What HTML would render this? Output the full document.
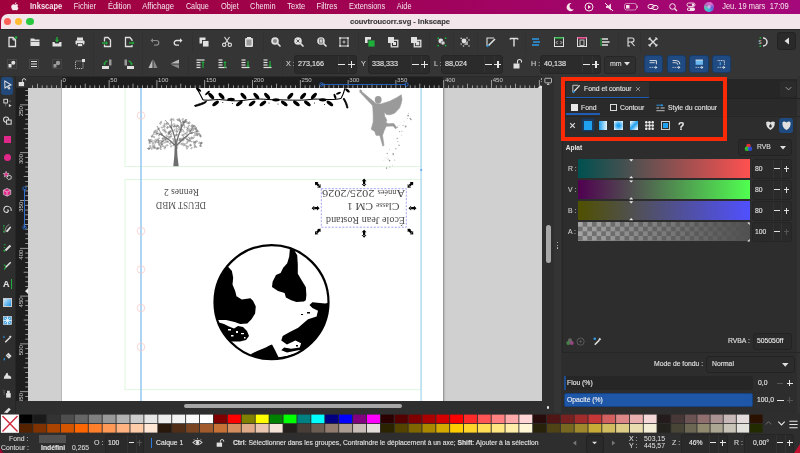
<!DOCTYPE html><html><head><meta charset="utf-8"><style>
html,body{margin:0;padding:0;}
body{width:800px;height:453px;overflow:hidden;position:relative;background:#2e2e2e;font-family:"Liberation Sans",sans-serif;}
.t{position:absolute;line-height:1;white-space:nowrap;-webkit-font-smoothing:antialiased;will-change:transform;-webkit-text-stroke:0.12px currentColor;}
.r{position:absolute;box-sizing:border-box;}
svg{position:absolute;overflow:visible;}
.tx{will-change:transform;pointer-events:none;}
</style></head><body>
<div class="r" style="left:0.00px;top:0.00px;width:800.00px;height:13.50px;background:linear-gradient(90deg,#a1023e 0%,#a0024a 35%,#a0035c 55%,#a2056c 75%,#a5087a 100%);"></div>
<svg style="left:11.2px;top:2px" width="7.6" height="8.7" viewBox="0 0 10 11.2"><path d="M5 3.3C5.8 3.3 6.5 2.7 7.6 2.8C8.4 2.85 9.1 3.2 9.6 3.9C8.3 4.7 8.2 6.9 9.8 7.7C9.4 8.9 8.5 10.9 7.4 10.9C6.6 10.9 6.3 10.4 5.3 10.4C4.3 10.4 3.9 10.9 3.1 10.9C2 10.9 0.3 8.4 0.3 6.2C0.3 4.1 1.8 2.8 3.1 2.8C4 2.8 4.4 3.3 5 3.3Z M5.1 2.6C5 1.5 5.8 0.4 7.1 0.2C7.2 1.5 6.3 2.5 5.1 2.6Z" fill="#f6eaee"/></svg>
<svg class="tx" style="left:0;top:0" width="800" height="453"><text x="30.00" y="9.09" textLength="32.25" lengthAdjust="spacingAndGlyphs" font-family="Liberation Sans" font-size="8.2" font-weight="700" fill="#f5e6ec">Inkscape</text></svg>
<svg class="tx" style="left:0;top:0" width="800" height="453"><text x="73.75" y="9.09" textLength="22.25" lengthAdjust="spacingAndGlyphs" font-family="Liberation Sans" font-size="8.2" font-weight="400" fill="#f5e6ec">Fichier</text></svg>
<svg class="tx" style="left:0;top:0" width="800" height="453"><text x="107.90" y="9.09" textLength="23.00" lengthAdjust="spacingAndGlyphs" font-family="Liberation Sans" font-size="8.2" font-weight="400" fill="#f5e6ec">Édition</text></svg>
<svg class="tx" style="left:0;top:0" width="800" height="453"><text x="142.20" y="9.09" textLength="31.80" lengthAdjust="spacingAndGlyphs" font-family="Liberation Sans" font-size="8.2" font-weight="400" fill="#f5e6ec">Affichage</text></svg>
<svg class="tx" style="left:0;top:0" width="800" height="453"><text x="185.90" y="9.09" textLength="22.90" lengthAdjust="spacingAndGlyphs" font-family="Liberation Sans" font-size="8.2" font-weight="400" fill="#f5e6ec">Calque</text></svg>
<svg class="tx" style="left:0;top:0" width="800" height="453"><text x="221.00" y="9.09" textLength="17.75" lengthAdjust="spacingAndGlyphs" font-family="Liberation Sans" font-size="8.2" font-weight="400" fill="#f5e6ec">Objet</text></svg>
<svg class="tx" style="left:0;top:0" width="800" height="453"><text x="250.10" y="9.09" textLength="25.40" lengthAdjust="spacingAndGlyphs" font-family="Liberation Sans" font-size="8.2" font-weight="400" fill="#f5e6ec">Chemin</text></svg>
<svg class="tx" style="left:0;top:0" width="800" height="453"><text x="287.25" y="9.09" textLength="18.00" lengthAdjust="spacingAndGlyphs" font-family="Liberation Sans" font-size="8.2" font-weight="400" fill="#f5e6ec">Texte</text></svg>
<svg class="tx" style="left:0;top:0" width="800" height="453"><text x="316.50" y="9.09" textLength="20.70" lengthAdjust="spacingAndGlyphs" font-family="Liberation Sans" font-size="8.2" font-weight="400" fill="#f5e6ec">Filtres</text></svg>
<svg class="tx" style="left:0;top:0" width="800" height="453"><text x="349.10" y="9.09" textLength="36.00" lengthAdjust="spacingAndGlyphs" font-family="Liberation Sans" font-size="8.2" font-weight="400" fill="#f5e6ec">Extensions</text></svg>
<svg class="tx" style="left:0;top:0" width="800" height="453"><text x="396.80" y="9.09" textLength="14.70" lengthAdjust="spacingAndGlyphs" font-family="Liberation Sans" font-size="8.2" font-weight="400" fill="#f5e6ec">Aide</text></svg>
<svg class="tx" style="left:0;top:0" width="800" height="453"><text x="722.15" y="9.09" textLength="43.20" lengthAdjust="spacingAndGlyphs" font-family="Liberation Sans" font-size="8.2" font-weight="400" fill="#f5e6ec">Jeu. 19 mars</text></svg>
<svg class="tx" style="left:0;top:0" width="800" height="453"><text x="769.85" y="9.09" textLength="18.90" lengthAdjust="spacingAndGlyphs" font-family="Liberation Sans" font-size="8.2" font-weight="400" fill="#f5e6ec">17:09</text></svg>
<svg style="left:565.00px;top:2.00px" width="10" height="10" viewBox="0 0 10 10"><path d="M6.5 1.2A4 4 0 1 0 9 7.3 3.3 3.3 0 0 1 6.5 1.2z" fill="#f5e6ec"/></svg>
<svg style="left:584.00px;top:2.00px" width="10" height="10" viewBox="0 0 10 10"><circle cx="5" cy="5" r="4" fill="none" stroke="#f5e6ec" stroke-width="1"/><path d="M4 3v4l3-2z" fill="#f5e6ec"/></svg>
<svg style="left:604.00px;top:2.00px" width="10" height="10" viewBox="0 0 10 10"><path d="M2 4h2l3-2.5v7L4 6H2z" fill="#f5e6ec" opacity="0.9"/><path d="M1 1l8 8" stroke="#f5e6ec" stroke-width="1"/></svg>
<svg style="left:623.50px;top:3.00px" width="14" height="8" viewBox="0 0 14 8"><rect x="0.5" y="0.5" width="12" height="6.5" rx="2" fill="none" stroke="#f5e6ec" stroke-width="0.8" opacity="0.7"/><rect x="2" y="2" width="3.5" height="3.5" fill="#f5e6ec"/><rect x="13" y="2.5" width="1" height="2.5" fill="#f5e6ec" opacity="0.6"/></svg>
<svg style="left:647.00px;top:2.00px" width="12" height="10" viewBox="0 0 12 10"><rect x="1" y="2.5" width="6" height="4" rx="2" fill="none" stroke="#f5e6ec" stroke-width="1"/><rect x="5" y="3.5" width="6" height="4" rx="2" fill="none" stroke="#f5e6ec" stroke-width="1"/></svg>
<svg style="left:668.00px;top:2.00px" width="10" height="10" viewBox="0 0 10 10"><circle cx="4.5" cy="4.5" r="2.8" fill="none" stroke="#f5e6ec" stroke-width="1"/><path d="M6.5 6.5l2.5 2.5" stroke="#f5e6ec" stroke-width="1.2"/></svg>
<svg style="left:686.00px;top:2.00px" width="10" height="10" viewBox="0 0 10 10"><rect x="1" y="1" width="8" height="3.5" rx="1.7" fill="none" stroke="#f5e6ec" stroke-width="0.9"/><circle cx="7" cy="2.75" r="1.2" fill="#f5e6ec"/><rect x="1" y="5.5" width="8" height="3.5" rx="1.7" fill="#f5e6ec"/><circle cx="3" cy="7.25" r="1" fill="#a1056e"/></svg>
<div class="r" style="left:704.30px;top:2.30px;width:9.40px;height:9.40px;background:conic-gradient(from 30deg,#e070d0,#6a5ad8,#3ab0e0,#50d0b0,#c060c0,#e070d0);border-radius:50%;"></div>
<div class="r" style="left:706.80px;top:4.80px;width:4.40px;height:4.40px;background:radial-gradient(circle,#f0e0ff,#9080e0);border-radius:50%;opacity:0.7;"></div>
<div class="r" style="left:0.00px;top:13.00px;width:20.00px;height:17.00px;background:#a1023e;"></div>
<div class="r" style="left:0.50px;top:13.50px;width:799.50px;height:16.20px;background:#f3e6eb;border-top-left-radius:7px;"></div>
<div class="r" style="left:0.00px;top:29.20px;width:800.00px;height:0.80px;background:#262626;"></div>
<div class="r" style="left:4.20px;top:18.00px;width:7.20px;height:7.20px;background:#fe5f57;border-radius:50%;"></div>
<div class="r" style="left:15.20px;top:18.00px;width:7.20px;height:7.20px;background:#febc2e;border-radius:50%;"></div>
<div class="r" style="left:26.40px;top:18.00px;width:7.20px;height:7.20px;background:#2ac840;border-radius:50%;"></div>
<div class="t" style="left:349.50px;top:17.94px;font-size:7.6px;color:#3a3839;font-weight:700;letter-spacing:-0.05px;">couvtroucorr.svg - Inkscape</div>
<div class="r" style="left:0.00px;top:30.00px;width:800.00px;height:46.00px;background:#353535;"></div>
<div class="r" style="left:92.75px;top:31.00px;width:0.80px;height:22.00px;background:#313131;"></div>
<div class="r" style="left:141.75px;top:31.00px;width:0.80px;height:22.00px;background:#313131;"></div>
<div class="r" style="left:191.60px;top:31.00px;width:0.80px;height:22.00px;background:#313131;"></div>
<div class="r" style="left:262.60px;top:31.00px;width:0.80px;height:22.00px;background:#313131;"></div>
<div class="r" style="left:358.00px;top:31.00px;width:0.80px;height:22.00px;background:#313131;"></div>
<div class="r" style="left:429.00px;top:31.00px;width:0.80px;height:22.00px;background:#313131;"></div>
<div class="r" style="left:453.00px;top:31.00px;width:0.80px;height:22.00px;background:#313131;"></div>
<div class="r" style="left:477.00px;top:31.00px;width:0.80px;height:22.00px;background:#313131;"></div>
<div class="r" style="left:525.00px;top:31.00px;width:0.80px;height:22.00px;background:#313131;"></div>
<div class="r" style="left:618.00px;top:31.00px;width:0.80px;height:22.00px;background:#313131;"></div>
<div class="r" style="left:640.00px;top:31.00px;width:0.80px;height:22.00px;background:#313131;"></div>
<div class="r" style="left:92.75px;top:54.00px;width:0.80px;height:21.00px;background:#313131;"></div>
<div class="r" style="left:141.75px;top:54.00px;width:0.80px;height:21.00px;background:#313131;"></div>
<div class="r" style="left:188.00px;top:54.00px;width:0.80px;height:21.00px;background:#313131;"></div>
<div class="r" style="left:281.90px;top:54.00px;width:0.80px;height:21.00px;background:#313131;"></div>
<svg style="left:5.80px;top:35.50px" width="12" height="12" viewBox="0 0 12 12"><path d="M3 1.5h4l2.5 2.5v6.5H3z" fill="none" stroke="#e0e0e0" stroke-width="1.3"/><path d="M7 1.5v2.5h2.5" fill="none" stroke="#e0e0e0" stroke-width="1"/><circle cx="10" cy="1.6" r="1.3" fill="#1fae3a"/></svg>
<svg style="left:28.80px;top:35.50px" width="12" height="12" viewBox="0 0 12 12"><path d="M1.5 2.5h3.5l1 1h4.5v6.5h-9z" fill="#e0e0e0"/><path d="M2 5.5h9" stroke="#555" stroke-width="0.8"/></svg>
<svg style="left:51.40px;top:35.50px" width="12" height="12" viewBox="0 0 12 12"><path d="M1.5 6h2l0.8 1.5h3.4L8.5 6h2v4.5h-9z" fill="#e0e0e0"/><path d="M6 1v4.5" stroke="#1fae3a" stroke-width="1.4"/><path d="M3.8 3.8L6 6.2 8.2 3.8z" fill="#1fae3a"/></svg>
<svg style="left:74.30px;top:35.50px" width="12" height="12" viewBox="0 0 12 12"><rect x="3" y="1.5" width="6" height="3" fill="#e0e0e0"/><rect x="1.5" y="4.5" width="9" height="4" rx="1" fill="#e0e0e0"/><rect x="3.5" y="7.5" width="5" height="3" fill="#e0e0e0" stroke="#353535" stroke-width="0.7"/></svg>
<svg style="left:100.60px;top:35.50px" width="12" height="12" viewBox="0 0 12 12"><path d="M3.5 1.5h3.5l2.5 2.5v6.5h-6v-2" fill="none" stroke="#e0e0e0" stroke-width="1.3"/><path d="M3.5 5.5v-4" stroke="#e0e0e0" stroke-width="1.3"/><path d="M1 7h5" stroke="#1fae3a" stroke-width="1.4"/><path d="M5 5l2 2-2 2z" fill="#1fae3a"/></svg>
<svg style="left:123.00px;top:35.50px" width="12" height="12" viewBox="0 0 12 12"><path d="M9 5V4L7 1.5H2.5v9H9V9" fill="none" stroke="#e0e0e0" stroke-width="1.3"/><path d="M6 7h4" stroke="#1fae3a" stroke-width="1.4"/><path d="M9.5 5l2 2-2 2z" fill="#1fae3a"/></svg>
<svg style="left:149.00px;top:35.50px" width="12" height="12" viewBox="0 0 12 12"><path d="M3 4.5h4.5a2.3 2.3 0 0 1 0 4.6H5" fill="none" stroke="#8a8a8a" stroke-width="1.2"/><path d="M1.5 4.5l2.5-2.3v4.6z" fill="#8a8a8a"/></svg>
<svg style="left:172.00px;top:35.50px" width="12" height="12" viewBox="0 0 12 12"><path d="M9 4.5H4.5a2.3 2.3 0 0 0 0 4.6H7" fill="none" stroke="#e0e0e0" stroke-width="1.3"/><path d="M10.5 4.5L8 2.2v4.6z" fill="#e0e0e0"/></svg>
<svg style="left:198.00px;top:35.50px" width="12" height="12" viewBox="0 0 12 12"><rect x="1.5" y="1.5" width="6" height="6" fill="#e0e0e0"/><rect x="4.5" y="4.5" width="6.5" height="6.5" fill="#e0e0e0" stroke="#353535" stroke-width="0.9"/></svg>
<svg style="left:221.00px;top:35.50px" width="12" height="12" viewBox="0 0 12 12"><circle cx="3.2" cy="8.8" r="1.7" fill="none" stroke="#e0e0e0" stroke-width="1.1"/><circle cx="8.8" cy="8.8" r="1.7" fill="none" stroke="#e0e0e0" stroke-width="1.1"/><path d="M4.2 7.5L8.5 1M7.8 7.5L3.5 1" stroke="#e0e0e0" stroke-width="1.1"/></svg>
<svg style="left:243.00px;top:35.50px" width="12" height="12" viewBox="0 0 12 12"><rect x="2" y="2" width="8" height="9" rx="1.2" fill="#e0e0e0"/><rect x="3.5" y="3.5" width="5" height="6" fill="#9a9a9a"/><rect x="4" y="1" width="4" height="2" fill="#e0e0e0"/></svg>
<svg style="left:269.50px;top:35.50px" width="12" height="12" viewBox="0 0 12 12"><circle cx="5" cy="5" r="3.8" fill="#e0e0e0"/><circle cx="5" cy="5" r="2" fill="#888"/><path d="M7.6 7.6L10.5 10.5" stroke="#e0e0e0" stroke-width="1.6"/></svg>
<svg style="left:292.80px;top:35.50px" width="12" height="12" viewBox="0 0 12 12"><circle cx="5" cy="5" r="3.8" fill="#e0e0e0"/><path d="M3.5 3.5l3 3M6.5 3.5l-3 3" stroke="#555" stroke-width="1"/><path d="M7.6 7.6L10.5 10.5" stroke="#e0e0e0" stroke-width="1.6"/></svg>
<svg style="left:315.80px;top:35.50px" width="12" height="12" viewBox="0 0 12 12"><circle cx="5" cy="5" r="3.8" fill="#e0e0e0"/><rect x="3.7" y="3" width="2.6" height="4" fill="none" stroke="#666" stroke-width="0.9"/><path d="M7.6 7.6L10.5 10.5" stroke="#e0e0e0" stroke-width="1.6"/></svg>
<svg style="left:338.40px;top:35.50px" width="12" height="12" viewBox="0 0 12 12"><rect x="2" y="2" width="8" height="8" fill="none" stroke="#e0e0e0" stroke-width="1"/><path d="M1 2h2M9 2h2M1 10h2M9 10h2M2 1v2M10 1v2M2 9v2M10 9v2" stroke="#e0e0e0" stroke-width="0.8"/><path d="M6 4.5v3M4.5 6h3" stroke="#e0e0e0" stroke-width="0.8"/></svg>
<svg style="left:364.00px;top:35.50px" width="12" height="12" viewBox="0 0 12 12"><rect x="1" y="1" width="6" height="6" fill="#e0e0e0"/><rect x="4" y="4" width="7" height="7" fill="#1fae3a" stroke="#353535" stroke-width="0.8"/></svg>
<svg style="left:387.00px;top:35.50px" width="12" height="12" viewBox="0 0 12 12"><rect x="1" y="1" width="6" height="6" fill="#e0e0e0"/><rect x="4.3" y="4.3" width="6.5" height="6.5" fill="none" stroke="#e0e0e0" stroke-width="1.3"/><rect x="6" y="6" width="3" height="3" fill="#e0e0e0"/></svg>
<svg style="left:410.00px;top:35.50px" width="12" height="12" viewBox="0 0 12 12"><rect x="1" y="1" width="6" height="6" fill="#e0e0e0"/><rect x="4.3" y="4.3" width="6.5" height="6.5" fill="none" stroke="#e0e0e0" stroke-width="1.3"/><rect x="5.8" y="5.5" width="3.5" height="3.8" fill="#e0e0e0"/></svg>
<svg style="left:436.00px;top:35.50px" width="12" height="12" viewBox="0 0 12 12"><circle cx="4.8" cy="5" r="2.4" fill="#e0e0e0"/><circle cx="7" cy="7" r="2" fill="#d0d0d0" stroke="#353535" stroke-width="0.5"/><circle cx="2.2" cy="2.2" r="0.9" fill="#1fae3a"/><circle cx="9.6" cy="2.2" r="0.9" fill="#1fae3a"/><circle cx="2.2" cy="9.6" r="0.9" fill="#1fae3a"/><circle cx="9.6" cy="9.6" r="0.9" fill="#1fae3a"/></svg>
<svg style="left:458.50px;top:35.50px" width="12" height="12" viewBox="0 0 12 12"><circle cx="5" cy="5" r="2.4" fill="#e0e0e0"/><path d="M7 6l2-1v4h-4z" fill="#aaa"/><circle cx="2.2" cy="2.2" r="0.8" fill="#ccc"/><circle cx="8" cy="2" r="0.8" fill="#ccc"/><circle cx="2.2" cy="8" r="0.8" fill="#ccc"/><circle cx="10" cy="4" r="0.8" fill="#ccc"/><circle cx="4.5" cy="10" r="0.8" fill="#ccc"/><circle cx="10" cy="10" r="0.8" fill="#ccc"/></svg>
<svg style="left:484.80px;top:35.50px" width="12" height="12" viewBox="0 0 12 12"><path d="M2 10V2h7" fill="none" stroke="#e0e0e0" stroke-width="1.1"/><path d="M3.5 9.5L10 3" stroke="#e0e0e0" stroke-width="1.6"/><path d="M2 10.8l1.8-1.8" stroke="#2a9bea" stroke-width="1.6"/></svg>
<svg style="left:507.80px;top:35.50px" width="12" height="12" viewBox="0 0 12 12"><path d="M2.2 2.5h7.6M6 2.5v8" fill="none" stroke="#e0e0e0" stroke-width="1.4"/><path d="M2.2 2v1.8M9.8 2v1.8" stroke="#e0e0e0" stroke-width="1"/></svg>
<svg style="left:530.00px;top:35.50px" width="12" height="12" viewBox="0 0 12 12"><path d="M2 3h7M3 6h7M2 9h7" stroke="#2a9bea" stroke-width="1.5"/></svg>
<svg style="left:553.00px;top:35.50px" width="12" height="12" viewBox="0 0 12 12"><rect x="1.5" y="1.5" width="9" height="9" fill="none" stroke="#e0e0e0" stroke-width="1"/><path d="M1.5 2h9" stroke="#1fae3a" stroke-width="1.5"/><path d="M4.5 5l-1.3 1.5 1.3 1.5M7.5 5l1.3 1.5-1.3 1.5" fill="none" stroke="#e0e0e0" stroke-width="0.8"/></svg>
<svg style="left:575.60px;top:35.50px" width="12" height="12" viewBox="0 0 12 12"><rect x="1.5" y="1.5" width="9" height="9" fill="none" stroke="#e0e0e0" stroke-width="1"/><path d="M1.5 2h9" stroke="#e0307a" stroke-width="1.5"/><rect x="4" y="4" width="4" height="5.5" fill="none" stroke="#e0e0e0" stroke-width="0.8"/></svg>
<svg style="left:599.00px;top:35.50px" width="12" height="12" viewBox="0 0 12 12"><path d="M2 2v8" stroke="#1fae3a" stroke-width="1"/><path d="M3 3h6M3 6h7.5M3 9h6" stroke="#e0e0e0" stroke-width="1.6"/></svg>
<svg style="left:624.60px;top:35.50px" width="12" height="12" viewBox="0 0 12 12"><path d="M3 2h4a2 2 0 0 1 0 4H3zM3 2v8h2M6 6l3.5 4" fill="none" stroke="#e0e0e0" stroke-width="1.1"/></svg>
<svg style="left:647.00px;top:35.50px" width="12" height="12" viewBox="0 0 12 12"><path d="M2.5 2.5l7 7M9.5 2.5L2.5 9.5" stroke="#e0e0e0" stroke-width="1.3"/><path d="M1.5 3.5L3.5 1.5M8.5 10.5l2-2M8.5 1.5l2 2M1.5 8.5l2 2" stroke="#e0e0e0" stroke-width="1.2"/></svg>
<svg style="left:757.00px;top:35.50px" width="12" height="12" viewBox="0 0 12 12"><path d="M6 2a4 4 0 1 1 0 8" fill="none" stroke="#e0e0e0" stroke-width="1.5"/><circle cx="3.3" cy="1.8" r="0.9" fill="#1fae3a"/><circle cx="3.3" cy="10.2" r="0.9" fill="#1fae3a"/><text x="1.5" y="7.6" font-size="4.5" fill="#e0e0e0" font-family="Liberation Sans">S</text></svg>
<div class="r" style="left:776.90px;top:32.00px;width:19.60px;height:18.00px;background:#2a2a2a;border-radius:3px;border:0.8px solid #222;"></div>
<svg style="left:780.70px;top:35.00px" width="12" height="12" viewBox="0 0 12 12"><path d="M8 2.5v7L3.5 6z" fill="#e0e0e0"/></svg>
<svg style="left:5.80px;top:58.10px" width="12" height="12" viewBox="0 0 12 12"><rect x="1.5" y="1.5" width="9" height="9" fill="none" stroke="#777" stroke-width="0.6" stroke-dasharray="1 1"/><rect x="2.5" y="2.5" width="7" height="7" fill="#3a3a3a"/><circle cx="7.3" cy="4.8" r="2" fill="#e0e0e0"/><path d="M2.5 6h3v3.5h-3z" fill="#e0e0e0"/></svg>
<svg style="left:28.40px;top:58.10px" width="12" height="12" viewBox="0 0 12 12"><rect x="1.5" y="1.5" width="9" height="9" fill="none" stroke="#777" stroke-width="0.6" stroke-dasharray="1 1"/><path d="M3 3.5h6M3 6h6M3 8.5h6" stroke="#e0e0e0" stroke-width="1.2"/></svg>
<svg style="left:51.40px;top:58.10px" width="12" height="12" viewBox="0 0 12 12"><rect x="1.5" y="1.5" width="9" height="9" fill="none" stroke="#666" stroke-width="0.6" stroke-dasharray="1 1"/><circle cx="7" cy="5" r="2.2" fill="#9a9a9a"/><path d="M2.5 6h3v3.5h-3z" fill="#9a9a9a"/></svg>
<svg style="left:74.30px;top:58.10px" width="12" height="12" viewBox="0 0 12 12"><rect x="1.5" y="3" width="7.5" height="7.5" fill="none" stroke="#e0e0e0" stroke-width="0.7" stroke-dasharray="1.2 0.8"/><rect x="8" y="1" width="3" height="3" fill="#e0e0e0"/></svg>
<svg style="left:100.60px;top:58.10px" width="12" height="12" viewBox="0 0 12 12"><rect x="8" y="1.5" width="2.5" height="6" fill="#9a9a9a"/><rect x="1" y="8" width="7" height="3" fill="#e0e0e0"/><path d="M6.5 3.2A3 3 0 0 0 3.5 6.5" fill="none" stroke="#1fae3a" stroke-width="1.3"/><path d="M2 5.5h3l-1.5 2z" fill="#1fae3a"/></svg>
<svg style="left:123.00px;top:58.10px" width="12" height="12" viewBox="0 0 12 12"><rect x="1.5" y="1.5" width="2.5" height="6" fill="#9a9a9a"/><rect x="4" y="8" width="7" height="3" fill="#e0e0e0"/><path d="M5.5 3.2A3 3 0 0 1 8.5 6.5" fill="none" stroke="#1fae3a" stroke-width="1.3"/><path d="M10 5.5H7l1.5 2z" fill="#1fae3a"/></svg>
<svg style="left:146.50px;top:58.10px" width="12" height="12" viewBox="0 0 12 12"><path d="M5.5 1.5v8.5H1.5z" fill="#bbb"/><path d="M6.5 1.5v8.5h4z" fill="#888"/></svg>
<svg style="left:168.80px;top:58.10px" width="12" height="12" viewBox="0 0 12 12"><path d="M1.5 5.5h8.5V1.5z" fill="#bbb"/><path d="M1.5 6.5h8.5v4z" fill="#888" transform="rotate(0)"/></svg>
<svg style="left:195.00px;top:58.10px" width="12" height="12" viewBox="0 0 12 12"><rect x="1.5" y="1.4" width="8" height="1.2" fill="#e0e0e0"/><rect x="1.5" y="3.9" width="4" height="1.2" fill="#e0e0e0"/><rect x="1.5" y="6.4" width="4" height="1.2" fill="#e0e0e0"/><rect x="1.5" y="8.9" width="4" height="1.2" fill="#e0e0e0"/><path d="M8 4v6" stroke="#1fae3a" stroke-width="1.2"/><path d="M6.3 5h3.4L8 3z" fill="#1fae3a"/></svg>
<svg style="left:216.70px;top:58.10px" width="12" height="12" viewBox="0 0 12 12"><rect x="1.5" y="1.4" width="4" height="1.2" fill="#e0e0e0"/><rect x="1.5" y="3.9" width="4" height="1.2" fill="#e0e0e0"/><rect x="1.5" y="6.4" width="4" height="1.2" fill="#e0e0e0"/><rect x="1.5" y="8.9" width="8" height="1.2" fill="#e0e0e0"/><path d="M8 4v6" stroke="#1fae3a" stroke-width="1.2"/><path d="M6.3 5h3.4L8 3z" fill="#1fae3a"/></svg>
<svg style="left:240.00px;top:58.10px" width="12" height="12" viewBox="0 0 12 12"><rect x="1.5" y="1.4" width="4" height="1.2" fill="#e0e0e0"/><rect x="1.5" y="3.9" width="4" height="1.2" fill="#e0e0e0"/><rect x="1.5" y="6.4" width="4" height="1.2" fill="#e0e0e0"/><rect x="1.5" y="8.9" width="8" height="1.2" fill="#e0e0e0"/><path d="M8 3v6" stroke="#1fae3a" stroke-width="1.2"/><path d="M6.3 7.5h3.4L8 9.5z" fill="#1fae3a"/></svg>
<svg style="left:262.40px;top:58.10px" width="12" height="12" viewBox="0 0 12 12"><rect x="1.5" y="1.4" width="4" height="1.2" fill="#e0e0e0"/><rect x="1.5" y="3.9" width="4" height="1.2" fill="#e0e0e0"/><rect x="1.5" y="6.4" width="4" height="1.2" fill="#e0e0e0"/><rect x="1.5" y="8.9" width="8" height="1.2" fill="#e0e0e0"/><path d="M8 3v6" stroke="#1fae3a" stroke-width="1.2"/><path d="M6.3 7.5h3.4L8 9.5z" fill="#1fae3a"/></svg>
<div class="t" style="left:286.00px;top:60.13px;font-size:7.2px;color:#cfcfcf;font-weight:400;">X :</div>
<div class="r" style="left:294.00px;top:55.00px;width:62.60px;height:18.75px;background:#2b2b2b;border-radius:3px;border:0.8px solid #262626;"></div>
<div class="r" style="left:337.60px;top:56.00px;width:0.70px;height:16.75px;background:#333;"></div>
<div class="r" style="left:347.60px;top:56.00px;width:0.70px;height:16.75px;background:#333;"></div>
<div class="t" style="left:298.00px;top:60.13px;font-size:7.2px;color:#e4e4e4;font-weight:400;">273,166</div>
<div class="r" style="left:338.30px;top:63.50px;width:7.00px;height:1.30px;background:#e6e6e6;"></div>
<div class="r" style="left:348.00px;top:63.50px;width:7.00px;height:1.30px;background:#e6e6e6;"></div>
<div class="r" style="left:350.85px;top:60.65px;width:1.30px;height:7.00px;background:#e6e6e6;"></div>
<div class="t" style="left:360.60px;top:60.13px;font-size:7.2px;color:#cfcfcf;font-weight:400;">Y :</div>
<div class="r" style="left:368.00px;top:55.00px;width:61.80px;height:18.75px;background:#2b2b2b;border-radius:3px;border:0.8px solid #262626;"></div>
<div class="r" style="left:410.80px;top:56.00px;width:0.70px;height:16.75px;background:#333;"></div>
<div class="r" style="left:420.80px;top:56.00px;width:0.70px;height:16.75px;background:#333;"></div>
<div class="t" style="left:372.00px;top:60.13px;font-size:7.2px;color:#e4e4e4;font-weight:400;">338,333</div>
<div class="r" style="left:411.50px;top:63.50px;width:7.00px;height:1.30px;background:#e6e6e6;"></div>
<div class="r" style="left:421.20px;top:63.50px;width:7.00px;height:1.30px;background:#e6e6e6;"></div>
<div class="r" style="left:424.05px;top:60.65px;width:1.30px;height:7.00px;background:#e6e6e6;"></div>
<div class="t" style="left:433.80px;top:60.13px;font-size:7.2px;color:#cfcfcf;font-weight:400;">L :</div>
<div class="r" style="left:441.00px;top:55.00px;width:62.00px;height:18.75px;background:#2b2b2b;border-radius:3px;border:0.8px solid #262626;"></div>
<div class="r" style="left:484.00px;top:56.00px;width:0.70px;height:16.75px;background:#333;"></div>
<div class="r" style="left:494.00px;top:56.00px;width:0.70px;height:16.75px;background:#333;"></div>
<div class="t" style="left:445.00px;top:60.13px;font-size:7.2px;color:#e4e4e4;font-weight:400;">88,024</div>
<div class="r" style="left:484.70px;top:63.50px;width:7.00px;height:1.30px;background:#e6e6e6;"></div>
<div class="r" style="left:494.40px;top:63.50px;width:7.00px;height:1.30px;background:#e6e6e6;"></div>
<div class="r" style="left:497.25px;top:60.65px;width:1.30px;height:7.00px;background:#e6e6e6;"></div>
<div class="t" style="left:530.50px;top:60.13px;font-size:7.2px;color:#cfcfcf;font-weight:400;">H :</div>
<div class="r" style="left:539.50px;top:55.00px;width:61.50px;height:18.75px;background:#2b2b2b;border-radius:3px;border:0.8px solid #262626;"></div>
<div class="r" style="left:582.00px;top:56.00px;width:0.70px;height:16.75px;background:#333;"></div>
<div class="r" style="left:592.00px;top:56.00px;width:0.70px;height:16.75px;background:#333;"></div>
<div class="t" style="left:543.50px;top:60.13px;font-size:7.2px;color:#e4e4e4;font-weight:400;">40,138</div>
<div class="r" style="left:582.70px;top:63.50px;width:7.00px;height:1.30px;background:#e6e6e6;"></div>
<div class="r" style="left:592.40px;top:63.50px;width:7.00px;height:1.30px;background:#e6e6e6;"></div>
<div class="r" style="left:595.25px;top:60.65px;width:1.30px;height:7.00px;background:#e6e6e6;"></div>
<svg style="left:510.50px;top:58.10px" width="12" height="12" viewBox="0 0 12 12"><rect x="2.5" y="5.5" width="6" height="5" fill="#e0e0e0"/><path d="M6.5 5.5V3.5a2 2 0 0 1 4 0v1" fill="none" stroke="#e0e0e0" stroke-width="1.1"/></svg>
<div class="r" style="left:604.00px;top:55.50px;width:32.00px;height:18.00px;background:#2f2f2f;border-radius:3px;border:0.8px solid #262626;"></div>
<div class="t" style="left:610.00px;top:60.23px;font-size:7px;color:#d8d8d8;font-weight:400;">mm</div>
<svg style="left:623.50px;top:62.20px" width="6" height="4" viewBox="0 0 6 4"><path d="M0 0h6L3 3.5z" fill="#e0e0e0"/></svg>
<div class="r" style="left:644.00px;top:55.30px;width:19.30px;height:17.60px;background:#1f4b82;border-radius:3px;border:0.8px solid #183a66;"></div>
<div class="r" style="left:666.65px;top:55.30px;width:19.30px;height:17.60px;background:#1f4b82;border-radius:3px;border:0.8px solid #183a66;"></div>
<div class="r" style="left:689.40px;top:55.30px;width:19.30px;height:17.60px;background:#1f4b82;border-radius:3px;border:0.8px solid #183a66;"></div>
<div class="r" style="left:712.00px;top:55.30px;width:19.30px;height:17.60px;background:#1f4b82;border-radius:3px;border:0.8px solid #183a66;"></div>
<svg style="left:647.40px;top:57.85px" width="12.5" height="12.5" viewBox="0 0 12 12"><path d="M2.5 2.5h6.5v3.5" fill="none" stroke="#e8e8e8" stroke-width="0.9"/><path d="M2.5 4.5h5" stroke="#e8e8e8" stroke-width="0.8"/><path d="M2.5 9h1M4.5 9h1M6.5 9h1" stroke="#e8e8e8" stroke-width="0.9"/><path d="M8 7.5l2 1.5-2 1.5z" fill="#e8e8e8"/></svg>
<svg style="left:670.05px;top:57.85px" width="12.5" height="12.5" viewBox="0 0 12 12"><path d="M2.5 2.5h3.5a3.5 3.5 0 0 1 3.5 3.5" fill="none" stroke="#e8e8e8" stroke-width="0.9"/><path d="M2.5 4.5h3a2 2 0 0 1 2 2" fill="none" stroke="#e8e8e8" stroke-width="0.8"/><path d="M2.5 9h1M4.5 9h1M6.5 9h1" stroke="#e8e8e8" stroke-width="0.9"/><path d="M8 7.5l2 1.5-2 1.5z" fill="#e8e8e8"/></svg>
<svg style="left:692.80px;top:57.85px" width="12.5" height="12.5" viewBox="0 0 12 12"><rect x="2.5" y="2" width="7" height="4.5" fill="#6ab8f0"/><path d="M2.5 2h7" stroke="#e8e8e8" stroke-width="0.9"/><path d="M2.5 9h1M4.5 9h1M6.5 9h1" stroke="#e8e8e8" stroke-width="0.9"/><path d="M8 7.5l2 1.5-2 1.5z" fill="#e8e8e8"/></svg>
<svg style="left:715.40px;top:57.85px" width="12.5" height="12.5" viewBox="0 0 12 12"><path d="M2.5 2.5h6.5v4" fill="none" stroke="#e8e8e8" stroke-width="0.9" stroke-dasharray="1 0.6"/><path d="M5 4v3" stroke="#6ab8f0" stroke-width="0.9"/><path d="M2.5 9h1M4.5 9h1M6.5 9h1" stroke="#e8e8e8" stroke-width="0.9"/><path d="M8 7.5l2 1.5-2 1.5z" fill="#e8e8e8"/></svg>
<div class="r" style="left:15.60px;top:76.00px;width:784.40px;height:12.00px;background:#2f2f2f;"></div>
<div class="r" style="left:61.50px;top:76.00px;width:381.50px;height:12.00px;background:#1e1e1e;"></div>
<div class="r" style="left:15.60px;top:88.00px;width:12.40px;height:313.30px;background:#2f2f2f;"></div>
<div class="r" style="left:15.60px;top:88.00px;width:12.40px;height:313.30px;background:#1e1e1e;"></div>
<div class="r" style="left:28.00px;top:76.00px;width:514.00px;height:0.80px;background:#2a2a2a;"></div>
<svg style="left:0.00px;top:0.00px" width="800" height="453" viewBox="0 0 800 453"><rect x="32.22" y="85.3" width="0.8" height="2.7" fill="#b5b5b5"/><rect x="37.00" y="83.7" width="0.8" height="4.3" fill="#b5b5b5"/><rect x="41.78" y="85.3" width="0.8" height="2.7" fill="#b5b5b5"/><rect x="46.56" y="85.3" width="0.8" height="2.7" fill="#b5b5b5"/><rect x="51.34" y="85.3" width="0.8" height="2.7" fill="#b5b5b5"/><rect x="56.12" y="85.3" width="0.8" height="2.7" fill="#b5b5b5"/><rect x="60.90" y="80" width="0.8" height="8" fill="#b5b5b5"/><rect x="65.68" y="85.3" width="0.8" height="2.7" fill="#b5b5b5"/><rect x="70.46" y="85.3" width="0.8" height="2.7" fill="#b5b5b5"/><rect x="75.24" y="85.3" width="0.8" height="2.7" fill="#b5b5b5"/><rect x="80.02" y="85.3" width="0.8" height="2.7" fill="#b5b5b5"/><rect x="84.80" y="83.7" width="0.8" height="4.3" fill="#b5b5b5"/><rect x="89.58" y="85.3" width="0.8" height="2.7" fill="#b5b5b5"/><rect x="94.36" y="85.3" width="0.8" height="2.7" fill="#b5b5b5"/><rect x="99.14" y="85.3" width="0.8" height="2.7" fill="#b5b5b5"/><rect x="103.92" y="85.3" width="0.8" height="2.7" fill="#b5b5b5"/><rect x="108.70" y="80" width="0.8" height="8" fill="#b5b5b5"/><rect x="113.48" y="85.3" width="0.8" height="2.7" fill="#b5b5b5"/><rect x="118.26" y="85.3" width="0.8" height="2.7" fill="#b5b5b5"/><rect x="123.04" y="85.3" width="0.8" height="2.7" fill="#b5b5b5"/><rect x="127.82" y="85.3" width="0.8" height="2.7" fill="#b5b5b5"/><rect x="132.60" y="83.7" width="0.8" height="4.3" fill="#b5b5b5"/><rect x="137.38" y="85.3" width="0.8" height="2.7" fill="#b5b5b5"/><rect x="142.16" y="85.3" width="0.8" height="2.7" fill="#b5b5b5"/><rect x="146.94" y="85.3" width="0.8" height="2.7" fill="#b5b5b5"/><rect x="151.72" y="85.3" width="0.8" height="2.7" fill="#b5b5b5"/><rect x="156.50" y="80" width="0.8" height="8" fill="#b5b5b5"/><rect x="161.28" y="85.3" width="0.8" height="2.7" fill="#b5b5b5"/><rect x="166.06" y="85.3" width="0.8" height="2.7" fill="#b5b5b5"/><rect x="170.84" y="85.3" width="0.8" height="2.7" fill="#b5b5b5"/><rect x="175.62" y="85.3" width="0.8" height="2.7" fill="#b5b5b5"/><rect x="180.40" y="83.7" width="0.8" height="4.3" fill="#b5b5b5"/><rect x="185.18" y="85.3" width="0.8" height="2.7" fill="#b5b5b5"/><rect x="189.96" y="85.3" width="0.8" height="2.7" fill="#b5b5b5"/><rect x="194.74" y="85.3" width="0.8" height="2.7" fill="#b5b5b5"/><rect x="199.52" y="85.3" width="0.8" height="2.7" fill="#b5b5b5"/><rect x="204.30" y="80" width="0.8" height="8" fill="#b5b5b5"/><rect x="209.08" y="85.3" width="0.8" height="2.7" fill="#b5b5b5"/><rect x="213.86" y="85.3" width="0.8" height="2.7" fill="#b5b5b5"/><rect x="218.64" y="85.3" width="0.8" height="2.7" fill="#b5b5b5"/><rect x="223.42" y="85.3" width="0.8" height="2.7" fill="#b5b5b5"/><rect x="228.20" y="83.7" width="0.8" height="4.3" fill="#b5b5b5"/><rect x="232.98" y="85.3" width="0.8" height="2.7" fill="#b5b5b5"/><rect x="237.76" y="85.3" width="0.8" height="2.7" fill="#b5b5b5"/><rect x="242.54" y="85.3" width="0.8" height="2.7" fill="#b5b5b5"/><rect x="247.32" y="85.3" width="0.8" height="2.7" fill="#b5b5b5"/><rect x="252.10" y="80" width="0.8" height="8" fill="#b5b5b5"/><rect x="256.88" y="85.3" width="0.8" height="2.7" fill="#b5b5b5"/><rect x="261.66" y="85.3" width="0.8" height="2.7" fill="#b5b5b5"/><rect x="266.44" y="85.3" width="0.8" height="2.7" fill="#b5b5b5"/><rect x="271.22" y="85.3" width="0.8" height="2.7" fill="#b5b5b5"/><rect x="276.00" y="83.7" width="0.8" height="4.3" fill="#b5b5b5"/><rect x="280.78" y="85.3" width="0.8" height="2.7" fill="#b5b5b5"/><rect x="285.56" y="85.3" width="0.8" height="2.7" fill="#b5b5b5"/><rect x="290.34" y="85.3" width="0.8" height="2.7" fill="#b5b5b5"/><rect x="295.12" y="85.3" width="0.8" height="2.7" fill="#b5b5b5"/><rect x="299.90" y="80" width="0.8" height="8" fill="#b5b5b5"/><rect x="304.68" y="85.3" width="0.8" height="2.7" fill="#b5b5b5"/><rect x="309.46" y="85.3" width="0.8" height="2.7" fill="#b5b5b5"/><rect x="314.24" y="85.3" width="0.8" height="2.7" fill="#b5b5b5"/><rect x="319.02" y="85.3" width="0.8" height="2.7" fill="#b5b5b5"/><rect x="323.80" y="83.7" width="0.8" height="4.3" fill="#b5b5b5"/><rect x="328.58" y="85.3" width="0.8" height="2.7" fill="#b5b5b5"/><rect x="333.36" y="85.3" width="0.8" height="2.7" fill="#b5b5b5"/><rect x="338.14" y="85.3" width="0.8" height="2.7" fill="#b5b5b5"/><rect x="342.92" y="85.3" width="0.8" height="2.7" fill="#b5b5b5"/><rect x="347.70" y="80" width="0.8" height="8" fill="#b5b5b5"/><rect x="352.48" y="85.3" width="0.8" height="2.7" fill="#b5b5b5"/><rect x="357.26" y="85.3" width="0.8" height="2.7" fill="#b5b5b5"/><rect x="362.04" y="85.3" width="0.8" height="2.7" fill="#b5b5b5"/><rect x="366.82" y="85.3" width="0.8" height="2.7" fill="#b5b5b5"/><rect x="371.60" y="83.7" width="0.8" height="4.3" fill="#b5b5b5"/><rect x="376.38" y="85.3" width="0.8" height="2.7" fill="#b5b5b5"/><rect x="381.16" y="85.3" width="0.8" height="2.7" fill="#b5b5b5"/><rect x="385.94" y="85.3" width="0.8" height="2.7" fill="#b5b5b5"/><rect x="390.72" y="85.3" width="0.8" height="2.7" fill="#b5b5b5"/><rect x="395.50" y="80" width="0.8" height="8" fill="#b5b5b5"/><rect x="400.28" y="85.3" width="0.8" height="2.7" fill="#b5b5b5"/><rect x="405.06" y="85.3" width="0.8" height="2.7" fill="#b5b5b5"/><rect x="409.84" y="85.3" width="0.8" height="2.7" fill="#b5b5b5"/><rect x="414.62" y="85.3" width="0.8" height="2.7" fill="#b5b5b5"/><rect x="419.40" y="83.7" width="0.8" height="4.3" fill="#b5b5b5"/><rect x="424.18" y="85.3" width="0.8" height="2.7" fill="#b5b5b5"/><rect x="428.96" y="85.3" width="0.8" height="2.7" fill="#b5b5b5"/><rect x="433.74" y="85.3" width="0.8" height="2.7" fill="#b5b5b5"/><rect x="438.52" y="85.3" width="0.8" height="2.7" fill="#b5b5b5"/><rect x="443.30" y="80" width="0.8" height="8" fill="#b5b5b5"/><rect x="448.08" y="85.3" width="0.8" height="2.7" fill="#b5b5b5"/><rect x="452.86" y="85.3" width="0.8" height="2.7" fill="#b5b5b5"/><rect x="457.64" y="85.3" width="0.8" height="2.7" fill="#b5b5b5"/><rect x="462.42" y="85.3" width="0.8" height="2.7" fill="#b5b5b5"/><rect x="467.20" y="83.7" width="0.8" height="4.3" fill="#b5b5b5"/><rect x="471.98" y="85.3" width="0.8" height="2.7" fill="#b5b5b5"/><rect x="476.76" y="85.3" width="0.8" height="2.7" fill="#b5b5b5"/><rect x="481.54" y="85.3" width="0.8" height="2.7" fill="#b5b5b5"/><rect x="486.32" y="85.3" width="0.8" height="2.7" fill="#b5b5b5"/><rect x="491.10" y="80" width="0.8" height="8" fill="#b5b5b5"/><rect x="495.88" y="85.3" width="0.8" height="2.7" fill="#b5b5b5"/><rect x="500.66" y="85.3" width="0.8" height="2.7" fill="#b5b5b5"/><rect x="505.44" y="85.3" width="0.8" height="2.7" fill="#b5b5b5"/><rect x="510.22" y="85.3" width="0.8" height="2.7" fill="#b5b5b5"/><rect x="515.00" y="83.7" width="0.8" height="4.3" fill="#b5b5b5"/><rect x="519.78" y="85.3" width="0.8" height="2.7" fill="#b5b5b5"/><rect x="524.56" y="85.3" width="0.8" height="2.7" fill="#b5b5b5"/><rect x="529.34" y="85.3" width="0.8" height="2.7" fill="#b5b5b5"/><rect x="534.12" y="85.3" width="0.8" height="2.7" fill="#b5b5b5"/><rect x="538.90" y="80" width="0.8" height="8" fill="#b5b5b5"/></svg>
<svg class="tx" style="left:0;top:0" width="800" height="453"><defs><clipPath id="rc"><rect x="28" y="76" width="514" height="12"/></clipPath></defs><g clip-path="url(#rc)"><text x="62.50" y="81.9" textLength="3.4" lengthAdjust="spacingAndGlyphs" font-family="Liberation Sans" font-size="6.2" fill="#c8c8c8">0</text><text x="110.30" y="81.9" textLength="6.8" lengthAdjust="spacingAndGlyphs" font-family="Liberation Sans" font-size="6.2" fill="#c8c8c8">50</text><text x="158.10" y="81.9" textLength="10.2" lengthAdjust="spacingAndGlyphs" font-family="Liberation Sans" font-size="6.2" fill="#c8c8c8">100</text><text x="205.90" y="81.9" textLength="10.2" lengthAdjust="spacingAndGlyphs" font-family="Liberation Sans" font-size="6.2" fill="#c8c8c8">150</text><text x="253.70" y="81.9" textLength="10.2" lengthAdjust="spacingAndGlyphs" font-family="Liberation Sans" font-size="6.2" fill="#c8c8c8">200</text><text x="301.50" y="81.9" textLength="10.2" lengthAdjust="spacingAndGlyphs" font-family="Liberation Sans" font-size="6.2" fill="#c8c8c8">250</text><text x="349.30" y="81.9" textLength="10.2" lengthAdjust="spacingAndGlyphs" font-family="Liberation Sans" font-size="6.2" fill="#c8c8c8">300</text><text x="397.10" y="81.9" textLength="10.2" lengthAdjust="spacingAndGlyphs" font-family="Liberation Sans" font-size="6.2" fill="#c8c8c8">350</text><text x="444.90" y="81.9" textLength="10.2" lengthAdjust="spacingAndGlyphs" font-family="Liberation Sans" font-size="6.2" fill="#c8c8c8">400</text><text x="492.70" y="81.9" textLength="10.2" lengthAdjust="spacingAndGlyphs" font-family="Liberation Sans" font-size="6.2" fill="#c8c8c8">450</text><text x="540.50" y="81.9" textLength="10.2" lengthAdjust="spacingAndGlyphs" font-family="Liberation Sans" font-size="6.2" fill="#c8c8c8">500</text></g></svg>
<svg style="left:0.00px;top:0.00px" width="800" height="453" viewBox="0 0 800 453"><rect x="25.3" y="90.16" width="2.7" height="0.8" fill="#b5b5b5"/><rect x="25.3" y="94.94" width="2.7" height="0.8" fill="#b5b5b5"/><rect x="25.3" y="99.72" width="2.7" height="0.8" fill="#b5b5b5"/><rect x="20" y="104.50" width="8" height="0.8" fill="#b5b5b5"/><rect x="25.3" y="109.28" width="2.7" height="0.8" fill="#b5b5b5"/><rect x="25.3" y="114.06" width="2.7" height="0.8" fill="#b5b5b5"/><rect x="25.3" y="118.84" width="2.7" height="0.8" fill="#b5b5b5"/><rect x="25.3" y="123.62" width="2.7" height="0.8" fill="#b5b5b5"/><rect x="23.7" y="128.40" width="4.3" height="0.8" fill="#b5b5b5"/><rect x="25.3" y="133.18" width="2.7" height="0.8" fill="#b5b5b5"/><rect x="25.3" y="137.96" width="2.7" height="0.8" fill="#b5b5b5"/><rect x="25.3" y="142.74" width="2.7" height="0.8" fill="#b5b5b5"/><rect x="25.3" y="147.52" width="2.7" height="0.8" fill="#b5b5b5"/><rect x="20" y="152.30" width="8" height="0.8" fill="#b5b5b5"/><rect x="25.3" y="157.08" width="2.7" height="0.8" fill="#b5b5b5"/><rect x="25.3" y="161.86" width="2.7" height="0.8" fill="#b5b5b5"/><rect x="25.3" y="166.64" width="2.7" height="0.8" fill="#b5b5b5"/><rect x="25.3" y="171.42" width="2.7" height="0.8" fill="#b5b5b5"/><rect x="23.7" y="176.20" width="4.3" height="0.8" fill="#b5b5b5"/><rect x="25.3" y="180.98" width="2.7" height="0.8" fill="#b5b5b5"/><rect x="25.3" y="185.76" width="2.7" height="0.8" fill="#b5b5b5"/><rect x="25.3" y="190.54" width="2.7" height="0.8" fill="#b5b5b5"/><rect x="25.3" y="195.32" width="2.7" height="0.8" fill="#b5b5b5"/><rect x="20" y="200.10" width="8" height="0.8" fill="#b5b5b5"/><rect x="25.3" y="204.88" width="2.7" height="0.8" fill="#b5b5b5"/><rect x="25.3" y="209.66" width="2.7" height="0.8" fill="#b5b5b5"/><rect x="25.3" y="214.44" width="2.7" height="0.8" fill="#b5b5b5"/><rect x="25.3" y="219.22" width="2.7" height="0.8" fill="#b5b5b5"/><rect x="23.7" y="224.00" width="4.3" height="0.8" fill="#b5b5b5"/><rect x="25.3" y="228.78" width="2.7" height="0.8" fill="#b5b5b5"/><rect x="25.3" y="233.56" width="2.7" height="0.8" fill="#b5b5b5"/><rect x="25.3" y="238.34" width="2.7" height="0.8" fill="#b5b5b5"/><rect x="25.3" y="243.12" width="2.7" height="0.8" fill="#b5b5b5"/><rect x="20" y="247.90" width="8" height="0.8" fill="#b5b5b5"/><rect x="25.3" y="252.68" width="2.7" height="0.8" fill="#b5b5b5"/><rect x="25.3" y="257.46" width="2.7" height="0.8" fill="#b5b5b5"/><rect x="25.3" y="262.24" width="2.7" height="0.8" fill="#b5b5b5"/><rect x="25.3" y="267.02" width="2.7" height="0.8" fill="#b5b5b5"/><rect x="23.7" y="271.80" width="4.3" height="0.8" fill="#b5b5b5"/><rect x="25.3" y="276.58" width="2.7" height="0.8" fill="#b5b5b5"/><rect x="25.3" y="281.36" width="2.7" height="0.8" fill="#b5b5b5"/><rect x="25.3" y="286.14" width="2.7" height="0.8" fill="#b5b5b5"/><rect x="25.3" y="290.92" width="2.7" height="0.8" fill="#b5b5b5"/><rect x="20" y="295.70" width="8" height="0.8" fill="#b5b5b5"/><rect x="25.3" y="300.48" width="2.7" height="0.8" fill="#b5b5b5"/><rect x="25.3" y="305.26" width="2.7" height="0.8" fill="#b5b5b5"/><rect x="25.3" y="310.04" width="2.7" height="0.8" fill="#b5b5b5"/><rect x="25.3" y="314.82" width="2.7" height="0.8" fill="#b5b5b5"/><rect x="23.7" y="319.60" width="4.3" height="0.8" fill="#b5b5b5"/><rect x="25.3" y="324.38" width="2.7" height="0.8" fill="#b5b5b5"/><rect x="25.3" y="329.16" width="2.7" height="0.8" fill="#b5b5b5"/><rect x="25.3" y="333.94" width="2.7" height="0.8" fill="#b5b5b5"/><rect x="25.3" y="338.72" width="2.7" height="0.8" fill="#b5b5b5"/><rect x="20" y="343.50" width="8" height="0.8" fill="#b5b5b5"/><rect x="25.3" y="348.28" width="2.7" height="0.8" fill="#b5b5b5"/><rect x="25.3" y="353.06" width="2.7" height="0.8" fill="#b5b5b5"/><rect x="25.3" y="357.84" width="2.7" height="0.8" fill="#b5b5b5"/><rect x="25.3" y="362.62" width="2.7" height="0.8" fill="#b5b5b5"/><rect x="23.7" y="367.40" width="4.3" height="0.8" fill="#b5b5b5"/><rect x="25.3" y="372.18" width="2.7" height="0.8" fill="#b5b5b5"/><rect x="25.3" y="376.96" width="2.7" height="0.8" fill="#b5b5b5"/><rect x="25.3" y="381.74" width="2.7" height="0.8" fill="#b5b5b5"/><rect x="25.3" y="386.52" width="2.7" height="0.8" fill="#b5b5b5"/><rect x="20" y="391.30" width="8" height="0.8" fill="#b5b5b5"/><rect x="25.3" y="396.08" width="2.7" height="0.8" fill="#b5b5b5"/><rect x="25.3" y="400.86" width="2.7" height="0.8" fill="#b5b5b5"/></svg>
<svg class="tx" style="left:0;top:0" width="800" height="453"><defs><clipPath id="vc"><rect x="15" y="88" width="14" height="313.3"/></clipPath></defs><g clip-path="url(#vc)"><text transform="translate(22.7 116.30) rotate(-90)" x="0" y="0" textLength="10.2" lengthAdjust="spacingAndGlyphs" font-family="Liberation Sans" font-size="6.2" fill="#c8c8c8">250</text><text transform="translate(22.7 164.10) rotate(-90)" x="0" y="0" textLength="10.2" lengthAdjust="spacingAndGlyphs" font-family="Liberation Sans" font-size="6.2" fill="#c8c8c8">300</text><text transform="translate(22.7 211.90) rotate(-90)" x="0" y="0" textLength="10.2" lengthAdjust="spacingAndGlyphs" font-family="Liberation Sans" font-size="6.2" fill="#c8c8c8">350</text><text transform="translate(22.7 259.70) rotate(-90)" x="0" y="0" textLength="10.2" lengthAdjust="spacingAndGlyphs" font-family="Liberation Sans" font-size="6.2" fill="#c8c8c8">400</text><text transform="translate(22.7 307.50) rotate(-90)" x="0" y="0" textLength="10.2" lengthAdjust="spacingAndGlyphs" font-family="Liberation Sans" font-size="6.2" fill="#c8c8c8">450</text><text transform="translate(22.7 355.30) rotate(-90)" x="0" y="0" textLength="10.2" lengthAdjust="spacingAndGlyphs" font-family="Liberation Sans" font-size="6.2" fill="#c8c8c8">500</text><text transform="translate(22.7 403.10) rotate(-90)" x="0" y="0" textLength="10.2" lengthAdjust="spacingAndGlyphs" font-family="Liberation Sans" font-size="6.2" fill="#c8c8c8">550</text></g></svg>
<svg style="left:0.00px;top:0.00px" width="800" height="453" viewBox="0 0 800 453"><path d="M28 288 L25.2 291 L28 294z" fill="#e8e8e8"/><path d="M537.8 88 L540.8 85.2 L543.8 88z" fill="#e8e8e8"/></svg>
<svg style="left:17.00px;top:77.00px" width="10" height="10" viewBox="0 0 12 12"><rect x="2" y="6" width="6.5" height="5" fill="#e0e0e0"/><path d="M6.5 6V4a2 2 0 0 1 4 0" fill="none" stroke="#e0e0e0" stroke-width="1.1"/></svg>
<div class="r" style="left:321.00px;top:83.50px;width:85.00px;height:1.00px;background:#2160b8;"></div>
<svg style="left:318.50px;top:81.50px" width="5" height="5" viewBox="0 0 5 5"><circle cx="2.5" cy="2.5" r="1.7" fill="none" stroke="#2c6fd1" stroke-width="0.9"/></svg>
<svg style="left:403.50px;top:81.50px" width="5" height="5" viewBox="0 0 5 5"><circle cx="2.5" cy="2.5" r="1.7" fill="none" stroke="#2c6fd1" stroke-width="0.9"/></svg>
<div class="r" style="left:23.80px;top:188.75px;width:0.90px;height:38.75px;background:#2c6fd1;"></div>
<svg style="left:21.70px;top:186.20px" width="5" height="5" viewBox="0 0 5 5"><circle cx="2.5" cy="2.5" r="1.7" fill="none" stroke="#2c6fd1" stroke-width="0.9"/></svg>
<svg style="left:21.70px;top:225.00px" width="5" height="5" viewBox="0 0 5 5"><circle cx="2.5" cy="2.5" r="1.7" fill="none" stroke="#2c6fd1" stroke-width="0.9"/></svg>
<div class="r" style="left:0.00px;top:76.00px;width:15.60px;height:338.00px;background:#2e2e2e;"></div>
<div class="r" style="left:1.30px;top:77.00px;width:12.20px;height:17.50px;background:#22497a;border-radius:3px;"></div>
<div class="r" style="left:14.60px;top:76.00px;width:1.00px;height:338.00px;background:#262626;"></div>
<svg style="left:1.80px;top:79.30px" width="11" height="11" viewBox="0 0 12 12"><path d="M3 2 L10 6.5 L6.8 7.3 L8.6 10.3 L7.3 11 L5.6 8 L3.2 10z" fill="none" stroke="#e0e0e0" stroke-width="1.1" stroke-linejoin="round"/></svg>
<svg style="left:1.80px;top:96.70px" width="11" height="11" viewBox="0 0 12 12"><rect x="2" y="2.5" width="4" height="4" fill="none" stroke="#e0e0e0" stroke-width="1"/><path d="M6 4.5h4M4 6.5v4" stroke="#e0e0e0" stroke-width="0.6" stroke-dasharray="0.8 0.6"/><path d="M7.5 7.5l3 2-3 1.5z" fill="#e0e0e0"/></svg>
<svg style="left:1.80px;top:114.90px" width="11" height="11" viewBox="0 0 12 12"><circle cx="4.5" cy="5" r="2.8" fill="none" stroke="#e0e0e0" stroke-width="1.1"/><rect x="5" y="5.5" width="5" height="4.5" fill="#2e2e2e" stroke="#e0e0e0" stroke-width="1.1"/></svg>
<div class="r" style="left:3.80px;top:136.20px;width:7.00px;height:7.00px;background:#e0288a;"></div>
<div class="r" style="left:3.60px;top:154.30px;width:7.20px;height:7.20px;background:#e0288a;border-radius:50%;"></div>
<svg style="left:1.80px;top:169.70px" width="11" height="11" viewBox="0 0 12 12"><path d="M4.5 1.5l1 2.2 2.3 0.2-1.8 1.5 0.6 2.3-2.1-1.3-2 1.3 0.6-2.3L1.3 3.9l2.3-0.2z" fill="#e0288a" stroke="#e0e0e0" stroke-width="0.6"/><path d="M7 5.5l3 1v3l-3 1-2-2z" fill="none" stroke="#e0e0e0" stroke-width="0.9"/></svg>
<svg style="left:1.80px;top:187.10px" width="11" height="11" viewBox="0 0 12 12"><path d="M5.5 1.5l4 2v4.5l-4 2-4-2V3.5z" fill="#e0288a" stroke="#e0e0e0" stroke-width="0.7"/><path d="M1.5 3.5l4 2 4-2M5.5 5.5v4.5" fill="none" stroke="#e0e0e0" stroke-width="0.7"/></svg>
<svg style="left:1.80px;top:204.90px" width="11" height="11" viewBox="0 0 12 12"><path d="M5.5 5.5a1 1 0 0 1 1.5 0.5 2 2 0 0 1-2.5 2 3 3 0 0 1-2.5-3.5 4 4 0 0 1 4.5-3 4.5 4.5 0 0 1 3.5 5" fill="none" stroke="#e0e0e0" stroke-width="1.1"/></svg>
<svg style="left:1.80px;top:223.00px" width="11" height="11" viewBox="0 0 12 12"><path d="M4 9 L9 3.5 L10 5 L6 10z" fill="#e0e0e0"/><path d="M3 10.5 C3.5 6 5 3 8 1.5" fill="none" stroke="#e0e0e0" stroke-width="0.6"/><circle cx="2" cy="3" r="0.9" fill="#1fae3a"/><circle cx="2" cy="9.5" r="0.9" fill="#1fae3a"/><path d="M2 3.5v5.5" stroke="#1fae3a" stroke-width="0.5"/></svg>
<svg style="left:1.80px;top:241.50px" width="11" height="11" viewBox="0 0 12 12"><path d="M3 8.5L8.5 3l1.5 1.5-5.5 5.5z" fill="#e0e0e0"/><path d="M2 3h2M2 6h1.5" stroke="#1fae3a" stroke-width="1"/><circle cx="2.5" cy="9.5" r="1" fill="#1fae3a"/></svg>
<svg style="left:1.80px;top:260.30px" width="11" height="11" viewBox="0 0 12 12"><path d="M3.5 8.5L9.5 2.5" stroke="#e0e0e0" stroke-width="1.6"/><path d="M2 5l2 1.5M2.5 10.5L4 8" stroke="#1fae3a" stroke-width="1.2"/></svg>
<div class="t" style="left:2.50px;top:279.66px;font-size:9px;color:#e0e0e0;font-weight:700;">A</div>
<div class="r" style="left:10.80px;top:279.00px;width:1.20px;height:9.50px;background:#1fae3a;"></div>
<div class="r" style="left:3px;top:297.7px;width:9px;height:9px;background:linear-gradient(135deg,#c8e8ff,#1b8fe0);border:0.8px solid #ccc;"></div>
<svg style="left:1.80px;top:315.00px" width="11" height="11" viewBox="0 0 12 12"><rect x="1.5" y="1.5" width="9" height="9" fill="#4aa8ec" stroke="#ddd" stroke-width="0.7"/><path d="M3 3l2.5 2.5M9 3L6.5 5.5M3 9l2.5-2.5M9 9L6.5 6.5M6 1.5v9M1.5 6h9" stroke="#fff" stroke-width="0.8"/></svg>
<svg style="left:1.80px;top:333.50px" width="11" height="11" viewBox="0 0 12 12"><path d="M3.5 9L8.5 4" stroke="#e0e0e0" stroke-width="1.6"/><path d="M7.5 3l1.5-1.5 1.5 1.5-1.5 1.5z" fill="#e0e0e0"/><path d="M2.2 1.5 C3.2 3 3.2 4 2.2 4.5 C1.2 4 1.2 3 2.2 1.5z" fill="#2a9bea"/></svg>
<svg style="left:1.80px;top:351.00px" width="11" height="11" viewBox="0 0 12 12"><path d="M4 5l3-3 3.5 3.5-3 3z" fill="#e0e0e0"/><path d="M6 4.5l1.5 1.5" stroke="#2e2e2e" stroke-width="0.8"/><path d="M2.5 7 C3.5 8.5 3.5 9.5 2.5 10.5 C1.5 9.5 1.5 8.5 2.5 7z" fill="#2a9bea"/></svg>
<svg style="left:1.80px;top:369.70px" width="11" height="11" viewBox="0 0 12 12"><path d="M2 9.5h8v-2c-1-1-2-1.5-3-1.5l-1-3c-1 0-2 1-2 2.5-1 0.5-2 2-2 4z" fill="#e0e0e0"/></svg>
<svg style="left:1.80px;top:388.30px" width="11" height="11" viewBox="0 0 12 12"><rect x="4.5" y="5.5" width="5" height="5" fill="#e0e0e0"/><rect x="5.5" y="3" width="3" height="2.5" fill="#e0e0e0"/><path d="M1.5 2l1 1M1.5 4.5h1.5M2 7l1-0.5" stroke="#aaa" stroke-width="0.7"/></svg>
<svg style="left:1.80px;top:404.10px" width="11" height="11" viewBox="0 0 12 12"><path d="M3 8.5L7.5 4l2 2L5 10.5z" fill="#e0e0e0"/><path d="M2 9.5l1-1 2 2-1 0.5z" fill="#aaa"/></svg>
<div class="r" style="left:28.00px;top:88.00px;width:514.00px;height:313.30px;background:#d0d0d0;"></div>
<div class="r" style="left:61.50px;top:88.00px;width:381.50px;height:313.30px;background:#ffffff;"></div>
<div class="r" style="left:443.00px;top:88.00px;width:3.00px;height:313.30px;background:linear-gradient(90deg,#8a8a8a,#c4c4c4 60%,#d0d0d0);"></div>
<div class="r" style="left:61.00px;top:88.00px;width:0.80px;height:313.30px;background:#b8b8b8;"></div>
<div class="r" style="left:28px;top:88px;width:514px;height:313.3px;overflow:hidden;"><svg style="left:-28px;top:-88px" width="800" height="453" viewBox="0 0 800 453"><rect x="125" y="60" width="296" height="106.6" fill="none" stroke="#d8f4d8" stroke-width="0.8"/><rect x="125" y="179.5" width="296" height="210.2" fill="none" stroke="#d8f4d8" stroke-width="0.8"/><rect x="140.3" y="88" width="1.4" height="313.3" fill="#8cc4ee"/><rect x="420.5" y="88" width="1.2" height="313.3" fill="#a8d4f2"/><circle cx="141" cy="115.5" r="3.8" fill="none" stroke="#f6c4c4" stroke-width="0.7"/><circle cx="141" cy="231" r="3.8" fill="none" stroke="#f6c4c4" stroke-width="0.7"/><circle cx="141" cy="269.5" r="3.8" fill="none" stroke="#f6c4c4" stroke-width="0.7"/><circle cx="141" cy="308" r="3.8" fill="none" stroke="#f6c4c4" stroke-width="0.7"/><circle cx="141" cy="347" r="3.8" fill="none" stroke="#f6c4c4" stroke-width="0.7"/><path d="M203 100 C210 101 216 98.5 225 100 S240 101 250 99.5 S268 100 276 99.8 S300 101 310 99.5 S330 101 341 98.5" fill="none" stroke="#000" stroke-width="1"/><path d="M203 100 C201 96 199 92 196.5 88" fill="none" stroke="#000" stroke-width="1.1"/><path d="M341 98.5 C343 95 344 92 345 88" fill="none" stroke="#000" stroke-width="1.1"/><ellipse cx="211.2" cy="96" rx="3.9" ry="1.8" transform="rotate(48 211.2 96)" fill="#000"/><ellipse cx="221.5" cy="96" rx="3.9" ry="1.8" transform="rotate(48 221.5 96)" fill="#000"/><ellipse cx="243.5" cy="96" rx="3.9" ry="1.8" transform="rotate(48 243.5 96)" fill="#000"/><ellipse cx="256.3" cy="96" rx="3.9" ry="1.8" transform="rotate(48 256.3 96)" fill="#000"/><ellipse cx="267.09999999999997" cy="96" rx="3.9" ry="1.8" transform="rotate(48 267.09999999999997 96)" fill="#000"/><ellipse cx="215.6" cy="103.4" rx="3.9" ry="1.8" transform="rotate(-38 215.6 103.4)" fill="#000"/><ellipse cx="239.29999999999998" cy="103.4" rx="3.9" ry="1.8" transform="rotate(-38 239.29999999999998 103.4)" fill="#000"/><ellipse cx="252.1" cy="103.4" rx="3.9" ry="1.8" transform="rotate(-38 252.1 103.4)" fill="#000"/><ellipse cx="262.90000000000003" cy="103.4" rx="3.9" ry="1.8" transform="rotate(-38 262.90000000000003 103.4)" fill="#000"/><ellipse cx="290.3" cy="96" rx="3.9" ry="1.8" transform="rotate(-48 290.3 96)" fill="#000"/><ellipse cx="303.1" cy="96" rx="3.9" ry="1.8" transform="rotate(-48 303.1 96)" fill="#000"/><ellipse cx="313.90000000000003" cy="96" rx="3.9" ry="1.8" transform="rotate(-48 313.90000000000003 96)" fill="#000"/><ellipse cx="284.29999999999995" cy="103.4" rx="3.9" ry="1.8" transform="rotate(38 284.29999999999995 103.4)" fill="#000"/><ellipse cx="296.4" cy="103.4" rx="3.9" ry="1.8" transform="rotate(38 296.4 103.4)" fill="#000"/><ellipse cx="307.4" cy="103.4" rx="3.9" ry="1.8" transform="rotate(38 307.4 103.4)" fill="#000"/><ellipse cx="329.9" cy="103.4" rx="3.9" ry="1.8" transform="rotate(38 329.9 103.4)" fill="#000"/><ellipse cx="231" cy="99.4" rx="3.8" ry="1.6" transform="rotate(0 231 99.4)" fill="#000"/><ellipse cx="276" cy="99.8" rx="3.8" ry="1.6" transform="rotate(0 276 99.8)" fill="#000"/><ellipse cx="322.8" cy="99.8" rx="3.8" ry="1.6" transform="rotate(0 322.8 99.8)" fill="#000"/><ellipse cx="198.7" cy="89.8" rx="2.8" ry="1.2" transform="rotate(35 198.7 89.8)" fill="#000"/><ellipse cx="207.5" cy="93" rx="3" ry="1.1" transform="rotate(-40 207.5 93)" fill="#000"/><path d="M194.5 105.5 C198 104 203 103 206.5 101 L206 102.5 C203 104.5 198 106 195 106.5z" fill="#000" stroke="#000" stroke-width="0.8"/><ellipse cx="335" cy="96.5" rx="3" ry="1.1" transform="rotate(70 335 96.5)" fill="#000"/><ellipse cx="338.5" cy="93.2" rx="2.6" ry="1.1" transform="rotate(-20 338.5 93.2)" fill="#000"/><ellipse cx="347.5" cy="90.5" rx="2.8" ry="1.2" transform="rotate(40 347.5 90.5)" fill="#000"/><path d="M344 98 C346 101 347.5 104 348 108 L346.8 108 C346 104 344.5 101 343 99z" fill="#000" stroke="#000" stroke-width="0.7"/><circle cx="222.8" cy="102.5" r="0.5" fill="#000"/><circle cx="232.4" cy="103.5" r="0.5" fill="#000"/><circle cx="269" cy="103" r="0.5" fill="#000"/><circle cx="278" cy="104" r="0.5" fill="#000"/><circle cx="314.5" cy="103" r="0.5" fill="#000"/><circle cx="324.5" cy="104.5" r="0.5" fill="#000"/><path d="M173.3 166.2 Q174.6 156 174.7 145.5 L176.9 145.5 Q177.1 156 178.7 166.2 Z" fill="#6e6e6e"/><path d="M175.8 146 Q170 140 162 135 M175.8 146 Q182 140 189 134 M175.8 145 Q175 135 171 127 M175.8 145 Q178 136 182 126" stroke="#6e6e6e" stroke-width="1.3" fill="none"/><path d="M162 135 L153 132 M162 135 L157 126 M189 134 L198 131 M189 134 L194 125 M171 127 L165 120 M171 127 L172 118 M182 126 L187 119 M182 126 L179 118 M168 138 L160 143 M183 137 L192 142" stroke="#707070" stroke-width="0.7" fill="none"/><ellipse cx="161.4" cy="134.2" rx="0.95" ry="0.55" transform="rotate(67 161.4 134.2)" fill="none" stroke="#6a6a6a" stroke-width="0.45"/><ellipse cx="181.1" cy="129.7" rx="0.95" ry="0.55" transform="rotate(12 181.1 129.7)" fill="none" stroke="#6a6a6a" stroke-width="0.45"/><ellipse cx="149.2" cy="139.9" rx="0.95" ry="0.55" transform="rotate(47 149.2 139.9)" fill="none" stroke="#6a6a6a" stroke-width="0.45"/><ellipse cx="161.2" cy="122.1" rx="0.95" ry="0.55" transform="rotate(85 161.2 122.1)" fill="none" stroke="#6a6a6a" stroke-width="0.45"/><ellipse cx="193.7" cy="137.6" rx="0.95" ry="0.55" transform="rotate(115 193.7 137.6)" fill="none" stroke="#6a6a6a" stroke-width="0.45"/><ellipse cx="156.6" cy="134.2" rx="0.95" ry="0.55" transform="rotate(156 156.6 134.2)" fill="none" stroke="#6a6a6a" stroke-width="0.45"/><ellipse cx="176.8" cy="125.7" rx="0.95" ry="0.55" transform="rotate(121 176.8 125.7)" fill="none" stroke="#6a6a6a" stroke-width="0.45"/><ellipse cx="152.0" cy="136.1" rx="0.95" ry="0.55" transform="rotate(106 152.0 136.1)" fill="none" stroke="#6a6a6a" stroke-width="0.45"/><ellipse cx="164.8" cy="148.1" rx="0.95" ry="0.55" transform="rotate(156 164.8 148.1)" fill="none" stroke="#6a6a6a" stroke-width="0.45"/><ellipse cx="174.0" cy="126.4" rx="0.95" ry="0.55" transform="rotate(158 174.0 126.4)" fill="none" stroke="#6a6a6a" stroke-width="0.45"/><ellipse cx="187.1" cy="122.6" rx="0.95" ry="0.55" transform="rotate(71 187.1 122.6)" fill="none" stroke="#6a6a6a" stroke-width="0.45"/><ellipse cx="191.7" cy="137.6" rx="0.95" ry="0.55" transform="rotate(168 191.7 137.6)" fill="none" stroke="#6a6a6a" stroke-width="0.45"/><ellipse cx="196.0" cy="146.9" rx="0.95" ry="0.55" transform="rotate(24 196.0 146.9)" fill="none" stroke="#6a6a6a" stroke-width="0.45"/><ellipse cx="160.2" cy="123.5" rx="0.95" ry="0.55" transform="rotate(79 160.2 123.5)" fill="none" stroke="#6a6a6a" stroke-width="0.45"/><ellipse cx="182.3" cy="139.8" rx="0.95" ry="0.55" transform="rotate(91 182.3 139.8)" fill="none" stroke="#6a6a6a" stroke-width="0.45"/><ellipse cx="169.3" cy="138.2" rx="0.95" ry="0.55" transform="rotate(105 169.3 138.2)" fill="none" stroke="#6a6a6a" stroke-width="0.45"/><ellipse cx="180.0" cy="120.9" rx="0.95" ry="0.55" transform="rotate(123 180.0 120.9)" fill="none" stroke="#6a6a6a" stroke-width="0.45"/><ellipse cx="198.7" cy="133.8" rx="0.95" ry="0.55" transform="rotate(178 198.7 133.8)" fill="none" stroke="#6a6a6a" stroke-width="0.45"/><ellipse cx="184.7" cy="144.2" rx="0.95" ry="0.55" transform="rotate(155 184.7 144.2)" fill="none" stroke="#6a6a6a" stroke-width="0.45"/><ellipse cx="200.6" cy="136.3" rx="0.95" ry="0.55" transform="rotate(102 200.6 136.3)" fill="none" stroke="#6a6a6a" stroke-width="0.45"/><ellipse cx="187.0" cy="142.9" rx="0.95" ry="0.55" transform="rotate(150 187.0 142.9)" fill="none" stroke="#6a6a6a" stroke-width="0.45"/><ellipse cx="179.5" cy="140.1" rx="0.95" ry="0.55" transform="rotate(11 179.5 140.1)" fill="none" stroke="#6a6a6a" stroke-width="0.45"/><ellipse cx="194.6" cy="126.2" rx="0.95" ry="0.55" transform="rotate(16 194.6 126.2)" fill="none" stroke="#6a6a6a" stroke-width="0.45"/><ellipse cx="191.7" cy="138.5" rx="0.95" ry="0.55" transform="rotate(27 191.7 138.5)" fill="none" stroke="#6a6a6a" stroke-width="0.45"/><ellipse cx="164.4" cy="126.8" rx="0.95" ry="0.55" transform="rotate(157 164.4 126.8)" fill="none" stroke="#6a6a6a" stroke-width="0.45"/><ellipse cx="150.9" cy="139.8" rx="0.95" ry="0.55" transform="rotate(8 150.9 139.8)" fill="none" stroke="#6a6a6a" stroke-width="0.45"/><ellipse cx="187.3" cy="139.5" rx="0.95" ry="0.55" transform="rotate(159 187.3 139.5)" fill="none" stroke="#6a6a6a" stroke-width="0.45"/><ellipse cx="201.5" cy="143.0" rx="0.95" ry="0.55" transform="rotate(180 201.5 143.0)" fill="none" stroke="#6a6a6a" stroke-width="0.45"/><ellipse cx="165.2" cy="146.7" rx="0.95" ry="0.55" transform="rotate(108 165.2 146.7)" fill="none" stroke="#6a6a6a" stroke-width="0.45"/><ellipse cx="150.2" cy="146.3" rx="0.95" ry="0.55" transform="rotate(73 150.2 146.3)" fill="none" stroke="#6a6a6a" stroke-width="0.45"/><ellipse cx="181.5" cy="144.2" rx="0.95" ry="0.55" transform="rotate(8 181.5 144.2)" fill="none" stroke="#6a6a6a" stroke-width="0.45"/><ellipse cx="195.4" cy="142.0" rx="0.95" ry="0.55" transform="rotate(173 195.4 142.0)" fill="none" stroke="#6a6a6a" stroke-width="0.45"/><ellipse cx="196.9" cy="141.3" rx="0.95" ry="0.55" transform="rotate(83 196.9 141.3)" fill="none" stroke="#6a6a6a" stroke-width="0.45"/><ellipse cx="176.6" cy="128.7" rx="0.95" ry="0.55" transform="rotate(107 176.6 128.7)" fill="none" stroke="#6a6a6a" stroke-width="0.45"/><ellipse cx="178.7" cy="129.6" rx="0.95" ry="0.55" transform="rotate(169 178.7 129.6)" fill="none" stroke="#6a6a6a" stroke-width="0.45"/><ellipse cx="175.9" cy="135.4" rx="0.95" ry="0.55" transform="rotate(130 175.9 135.4)" fill="none" stroke="#6a6a6a" stroke-width="0.45"/><ellipse cx="161.3" cy="140.8" rx="0.95" ry="0.55" transform="rotate(176 161.3 140.8)" fill="none" stroke="#6a6a6a" stroke-width="0.45"/><ellipse cx="176.6" cy="131.7" rx="0.95" ry="0.55" transform="rotate(2 176.6 131.7)" fill="none" stroke="#6a6a6a" stroke-width="0.45"/><ellipse cx="170.9" cy="131.0" rx="0.95" ry="0.55" transform="rotate(4 170.9 131.0)" fill="none" stroke="#6a6a6a" stroke-width="0.45"/><ellipse cx="181.8" cy="129.6" rx="0.95" ry="0.55" transform="rotate(11 181.8 129.6)" fill="none" stroke="#6a6a6a" stroke-width="0.45"/><ellipse cx="182.4" cy="134.8" rx="0.95" ry="0.55" transform="rotate(122 182.4 134.8)" fill="none" stroke="#6a6a6a" stroke-width="0.45"/><ellipse cx="167.5" cy="127.7" rx="0.95" ry="0.55" transform="rotate(133 167.5 127.7)" fill="none" stroke="#6a6a6a" stroke-width="0.45"/><ellipse cx="149.7" cy="148.3" rx="0.95" ry="0.55" transform="rotate(122 149.7 148.3)" fill="none" stroke="#6a6a6a" stroke-width="0.45"/><ellipse cx="200.5" cy="145.4" rx="0.95" ry="0.55" transform="rotate(82 200.5 145.4)" fill="none" stroke="#6a6a6a" stroke-width="0.45"/><ellipse cx="180.5" cy="139.1" rx="0.95" ry="0.55" transform="rotate(66 180.5 139.1)" fill="none" stroke="#6a6a6a" stroke-width="0.45"/><ellipse cx="165.4" cy="138.2" rx="0.95" ry="0.55" transform="rotate(107 165.4 138.2)" fill="none" stroke="#6a6a6a" stroke-width="0.45"/><ellipse cx="164.7" cy="138.0" rx="0.95" ry="0.55" transform="rotate(139 164.7 138.0)" fill="none" stroke="#6a6a6a" stroke-width="0.45"/><ellipse cx="150.0" cy="141.7" rx="0.95" ry="0.55" transform="rotate(132 150.0 141.7)" fill="none" stroke="#6a6a6a" stroke-width="0.45"/><ellipse cx="165.2" cy="142.5" rx="0.95" ry="0.55" transform="rotate(145 165.2 142.5)" fill="none" stroke="#6a6a6a" stroke-width="0.45"/><ellipse cx="161.4" cy="143.9" rx="0.95" ry="0.55" transform="rotate(78 161.4 143.9)" fill="none" stroke="#6a6a6a" stroke-width="0.45"/><ellipse cx="186.2" cy="146.0" rx="0.95" ry="0.55" transform="rotate(58 186.2 146.0)" fill="none" stroke="#6a6a6a" stroke-width="0.45"/><ellipse cx="166.5" cy="124.1" rx="0.95" ry="0.55" transform="rotate(79 166.5 124.1)" fill="none" stroke="#6a6a6a" stroke-width="0.45"/><ellipse cx="194.7" cy="145.1" rx="0.95" ry="0.55" transform="rotate(61 194.7 145.1)" fill="none" stroke="#6a6a6a" stroke-width="0.45"/><ellipse cx="183.6" cy="122.3" rx="0.95" ry="0.55" transform="rotate(81 183.6 122.3)" fill="none" stroke="#6a6a6a" stroke-width="0.45"/><ellipse cx="160.7" cy="145.8" rx="0.95" ry="0.55" transform="rotate(95 160.7 145.8)" fill="none" stroke="#6a6a6a" stroke-width="0.45"/><ellipse cx="158.8" cy="128.6" rx="0.95" ry="0.55" transform="rotate(151 158.8 128.6)" fill="none" stroke="#6a6a6a" stroke-width="0.45"/><ellipse cx="158.4" cy="142.0" rx="0.95" ry="0.55" transform="rotate(145 158.4 142.0)" fill="none" stroke="#6a6a6a" stroke-width="0.45"/><ellipse cx="183.2" cy="124.6" rx="0.95" ry="0.55" transform="rotate(62 183.2 124.6)" fill="none" stroke="#6a6a6a" stroke-width="0.45"/><ellipse cx="155.5" cy="142.6" rx="0.95" ry="0.55" transform="rotate(143 155.5 142.6)" fill="none" stroke="#6a6a6a" stroke-width="0.45"/><ellipse cx="163.1" cy="139.2" rx="0.95" ry="0.55" transform="rotate(75 163.1 139.2)" fill="none" stroke="#6a6a6a" stroke-width="0.45"/><ellipse cx="171.2" cy="136.3" rx="0.95" ry="0.55" transform="rotate(166 171.2 136.3)" fill="none" stroke="#6a6a6a" stroke-width="0.45"/><ellipse cx="156.9" cy="148.9" rx="0.95" ry="0.55" transform="rotate(170 156.9 148.9)" fill="none" stroke="#6a6a6a" stroke-width="0.45"/><ellipse cx="196.0" cy="127.8" rx="0.95" ry="0.55" transform="rotate(78 196.0 127.8)" fill="none" stroke="#6a6a6a" stroke-width="0.45"/><ellipse cx="199.8" cy="134.5" rx="0.95" ry="0.55" transform="rotate(40 199.8 134.5)" fill="none" stroke="#6a6a6a" stroke-width="0.45"/><ellipse cx="188.8" cy="125.8" rx="0.95" ry="0.55" transform="rotate(119 188.8 125.8)" fill="none" stroke="#6a6a6a" stroke-width="0.45"/><ellipse cx="176.5" cy="139.9" rx="0.95" ry="0.55" transform="rotate(61 176.5 139.9)" fill="none" stroke="#6a6a6a" stroke-width="0.45"/><ellipse cx="160.8" cy="147.2" rx="0.95" ry="0.55" transform="rotate(106 160.8 147.2)" fill="none" stroke="#6a6a6a" stroke-width="0.45"/><ellipse cx="164.0" cy="125.7" rx="0.95" ry="0.55" transform="rotate(8 164.0 125.7)" fill="none" stroke="#6a6a6a" stroke-width="0.45"/><ellipse cx="197.3" cy="135.3" rx="0.95" ry="0.55" transform="rotate(166 197.3 135.3)" fill="none" stroke="#6a6a6a" stroke-width="0.45"/><ellipse cx="196.9" cy="130.7" rx="0.95" ry="0.55" transform="rotate(104 196.9 130.7)" fill="none" stroke="#6a6a6a" stroke-width="0.45"/><ellipse cx="149.2" cy="140.9" rx="0.95" ry="0.55" transform="rotate(31 149.2 140.9)" fill="none" stroke="#6a6a6a" stroke-width="0.45"/><ellipse cx="164.7" cy="129.7" rx="0.95" ry="0.55" transform="rotate(94 164.7 129.7)" fill="none" stroke="#6a6a6a" stroke-width="0.45"/><ellipse cx="170.8" cy="119.8" rx="0.95" ry="0.55" transform="rotate(110 170.8 119.8)" fill="none" stroke="#6a6a6a" stroke-width="0.45"/><ellipse cx="166.9" cy="141.4" rx="0.95" ry="0.55" transform="rotate(155 166.9 141.4)" fill="none" stroke="#6a6a6a" stroke-width="0.45"/><ellipse cx="174.3" cy="124.4" rx="0.95" ry="0.55" transform="rotate(63 174.3 124.4)" fill="none" stroke="#6a6a6a" stroke-width="0.45"/><ellipse cx="159.2" cy="135.3" rx="0.95" ry="0.55" transform="rotate(147 159.2 135.3)" fill="none" stroke="#6a6a6a" stroke-width="0.45"/><ellipse cx="157.8" cy="129.7" rx="0.95" ry="0.55" transform="rotate(166 157.8 129.7)" fill="none" stroke="#6a6a6a" stroke-width="0.45"/><ellipse cx="192.0" cy="128.1" rx="0.95" ry="0.55" transform="rotate(1 192.0 128.1)" fill="none" stroke="#6a6a6a" stroke-width="0.45"/><ellipse cx="182.4" cy="122.7" rx="0.95" ry="0.55" transform="rotate(9 182.4 122.7)" fill="none" stroke="#6a6a6a" stroke-width="0.45"/><ellipse cx="163.2" cy="141.4" rx="0.95" ry="0.55" transform="rotate(95 163.2 141.4)" fill="none" stroke="#6a6a6a" stroke-width="0.45"/><ellipse cx="171.3" cy="134.3" rx="0.95" ry="0.55" transform="rotate(140 171.3 134.3)" fill="none" stroke="#6a6a6a" stroke-width="0.45"/><ellipse cx="148.6" cy="148.5" rx="0.95" ry="0.55" transform="rotate(23 148.6 148.5)" fill="none" stroke="#6a6a6a" stroke-width="0.45"/><ellipse cx="155.2" cy="147.5" rx="0.95" ry="0.55" transform="rotate(175 155.2 147.5)" fill="none" stroke="#6a6a6a" stroke-width="0.45"/><ellipse cx="194.6" cy="147.0" rx="0.95" ry="0.55" transform="rotate(90 194.6 147.0)" fill="none" stroke="#6a6a6a" stroke-width="0.45"/><ellipse cx="165.6" cy="139.7" rx="0.95" ry="0.55" transform="rotate(63 165.6 139.7)" fill="none" stroke="#6a6a6a" stroke-width="0.45"/><ellipse cx="183.4" cy="131.3" rx="0.95" ry="0.55" transform="rotate(65 183.4 131.3)" fill="none" stroke="#6a6a6a" stroke-width="0.45"/><ellipse cx="158.8" cy="140.7" rx="0.95" ry="0.55" transform="rotate(22 158.8 140.7)" fill="none" stroke="#6a6a6a" stroke-width="0.45"/><ellipse cx="178.5" cy="126.6" rx="0.95" ry="0.55" transform="rotate(68 178.5 126.6)" fill="none" stroke="#6a6a6a" stroke-width="0.45"/><ellipse cx="152.8" cy="145.7" rx="0.95" ry="0.55" transform="rotate(67 152.8 145.7)" fill="none" stroke="#6a6a6a" stroke-width="0.45"/><ellipse cx="181.1" cy="124.9" rx="0.95" ry="0.55" transform="rotate(68 181.1 124.9)" fill="none" stroke="#6a6a6a" stroke-width="0.45"/><ellipse cx="191.8" cy="133.0" rx="0.95" ry="0.55" transform="rotate(78 191.8 133.0)" fill="none" stroke="#6a6a6a" stroke-width="0.45"/><ellipse cx="168.6" cy="133.9" rx="0.95" ry="0.55" transform="rotate(127 168.6 133.9)" fill="none" stroke="#6a6a6a" stroke-width="0.45"/><ellipse cx="171.2" cy="127.4" rx="0.95" ry="0.55" transform="rotate(83 171.2 127.4)" fill="none" stroke="#6a6a6a" stroke-width="0.45"/><ellipse cx="161.7" cy="134.3" rx="0.95" ry="0.55" transform="rotate(125 161.7 134.3)" fill="none" stroke="#6a6a6a" stroke-width="0.45"/><ellipse cx="152.4" cy="141.5" rx="0.95" ry="0.55" transform="rotate(77 152.4 141.5)" fill="none" stroke="#6a6a6a" stroke-width="0.45"/><ellipse cx="196.0" cy="128.9" rx="0.95" ry="0.55" transform="rotate(67 196.0 128.9)" fill="none" stroke="#6a6a6a" stroke-width="0.45"/><ellipse cx="197.0" cy="133.0" rx="0.95" ry="0.55" transform="rotate(47 197.0 133.0)" fill="none" stroke="#6a6a6a" stroke-width="0.45"/><ellipse cx="173.6" cy="145.1" rx="0.95" ry="0.55" transform="rotate(146 173.6 145.1)" fill="none" stroke="#6a6a6a" stroke-width="0.45"/><ellipse cx="184.3" cy="122.5" rx="0.95" ry="0.55" transform="rotate(143 184.3 122.5)" fill="none" stroke="#6a6a6a" stroke-width="0.45"/><ellipse cx="184.5" cy="127.1" rx="0.95" ry="0.55" transform="rotate(101 184.5 127.1)" fill="none" stroke="#6a6a6a" stroke-width="0.45"/><ellipse cx="154.1" cy="137.1" rx="0.95" ry="0.55" transform="rotate(1 154.1 137.1)" fill="none" stroke="#6a6a6a" stroke-width="0.45"/><ellipse cx="156.2" cy="131.3" rx="0.95" ry="0.55" transform="rotate(8 156.2 131.3)" fill="none" stroke="#6a6a6a" stroke-width="0.45"/><ellipse cx="153.5" cy="147.1" rx="0.95" ry="0.55" transform="rotate(158 153.5 147.1)" fill="none" stroke="#6a6a6a" stroke-width="0.45"/><ellipse cx="158.2" cy="148.4" rx="0.95" ry="0.55" transform="rotate(151 158.2 148.4)" fill="none" stroke="#6a6a6a" stroke-width="0.45"/><ellipse cx="155.0" cy="130.8" rx="0.95" ry="0.55" transform="rotate(121 155.0 130.8)" fill="none" stroke="#6a6a6a" stroke-width="0.45"/><ellipse cx="193.7" cy="126.2" rx="0.95" ry="0.55" transform="rotate(104 193.7 126.2)" fill="none" stroke="#6a6a6a" stroke-width="0.45"/><ellipse cx="191.6" cy="148.1" rx="0.95" ry="0.55" transform="rotate(138 191.6 148.1)" fill="none" stroke="#6a6a6a" stroke-width="0.45"/><ellipse cx="176.1" cy="126.5" rx="0.95" ry="0.55" transform="rotate(19 176.1 126.5)" fill="none" stroke="#6a6a6a" stroke-width="0.45"/><ellipse cx="188.9" cy="123.2" rx="0.95" ry="0.55" transform="rotate(11 188.9 123.2)" fill="none" stroke="#6a6a6a" stroke-width="0.45"/><ellipse cx="166.0" cy="132.3" rx="0.95" ry="0.55" transform="rotate(149 166.0 132.3)" fill="none" stroke="#6a6a6a" stroke-width="0.45"/><ellipse cx="161.6" cy="144.1" rx="0.95" ry="0.55" transform="rotate(45 161.6 144.1)" fill="none" stroke="#6a6a6a" stroke-width="0.45"/><ellipse cx="181.8" cy="125.9" rx="0.95" ry="0.55" transform="rotate(71 181.8 125.9)" fill="none" stroke="#6a6a6a" stroke-width="0.45"/><ellipse cx="168.3" cy="136.9" rx="0.95" ry="0.55" transform="rotate(63 168.3 136.9)" fill="none" stroke="#6a6a6a" stroke-width="0.45"/><ellipse cx="171.1" cy="146.4" rx="0.95" ry="0.55" transform="rotate(90 171.1 146.4)" fill="none" stroke="#6a6a6a" stroke-width="0.45"/><ellipse cx="201.0" cy="143.7" rx="0.95" ry="0.55" transform="rotate(135 201.0 143.7)" fill="none" stroke="#6a6a6a" stroke-width="0.45"/><ellipse cx="157.2" cy="132.5" rx="0.95" ry="0.55" transform="rotate(136 157.2 132.5)" fill="none" stroke="#6a6a6a" stroke-width="0.45"/><ellipse cx="184.9" cy="133.7" rx="0.95" ry="0.55" transform="rotate(87 184.9 133.7)" fill="none" stroke="#6a6a6a" stroke-width="0.45"/><ellipse cx="183.2" cy="121.8" rx="0.95" ry="0.55" transform="rotate(27 183.2 121.8)" fill="none" stroke="#6a6a6a" stroke-width="0.45"/><ellipse cx="153.7" cy="134.2" rx="0.95" ry="0.55" transform="rotate(165 153.7 134.2)" fill="none" stroke="#6a6a6a" stroke-width="0.45"/><ellipse cx="176.4" cy="135.1" rx="0.95" ry="0.55" transform="rotate(129 176.4 135.1)" fill="none" stroke="#6a6a6a" stroke-width="0.45"/><ellipse cx="158.5" cy="142.3" rx="0.95" ry="0.55" transform="rotate(36 158.5 142.3)" fill="none" stroke="#6a6a6a" stroke-width="0.45"/><ellipse cx="180.1" cy="139.2" rx="0.95" ry="0.55" transform="rotate(42 180.1 139.2)" fill="none" stroke="#6a6a6a" stroke-width="0.45"/><ellipse cx="185.8" cy="121.1" rx="0.95" ry="0.55" transform="rotate(53 185.8 121.1)" fill="none" stroke="#6a6a6a" stroke-width="0.45"/><ellipse cx="186.6" cy="137.0" rx="0.95" ry="0.55" transform="rotate(154 186.6 137.0)" fill="none" stroke="#6a6a6a" stroke-width="0.45"/><ellipse cx="180.1" cy="140.7" rx="0.95" ry="0.55" transform="rotate(39 180.1 140.7)" fill="none" stroke="#6a6a6a" stroke-width="0.45"/><ellipse cx="149.7" cy="143.1" rx="0.95" ry="0.55" transform="rotate(69 149.7 143.1)" fill="none" stroke="#6a6a6a" stroke-width="0.45"/><ellipse cx="157.8" cy="140.2" rx="0.95" ry="0.55" transform="rotate(58 157.8 140.2)" fill="none" stroke="#6a6a6a" stroke-width="0.45"/><ellipse cx="190.3" cy="145.2" rx="0.95" ry="0.55" transform="rotate(178 190.3 145.2)" fill="none" stroke="#6a6a6a" stroke-width="0.45"/><ellipse cx="174.4" cy="130.1" rx="0.95" ry="0.55" transform="rotate(84 174.4 130.1)" fill="none" stroke="#6a6a6a" stroke-width="0.45"/><ellipse cx="193.6" cy="129.2" rx="0.95" ry="0.55" transform="rotate(100 193.6 129.2)" fill="none" stroke="#6a6a6a" stroke-width="0.45"/><ellipse cx="174.5" cy="126.3" rx="0.95" ry="0.55" transform="rotate(154 174.5 126.3)" fill="none" stroke="#6a6a6a" stroke-width="0.45"/><ellipse cx="170.1" cy="126.3" rx="0.95" ry="0.55" transform="rotate(173 170.1 126.3)" fill="none" stroke="#6a6a6a" stroke-width="0.45"/><ellipse cx="173.7" cy="141.8" rx="0.95" ry="0.55" transform="rotate(42 173.7 141.8)" fill="none" stroke="#6a6a6a" stroke-width="0.45"/><ellipse cx="187.3" cy="129.7" rx="0.95" ry="0.55" transform="rotate(173 187.3 129.7)" fill="none" stroke="#6a6a6a" stroke-width="0.45"/><ellipse cx="194.6" cy="143.4" rx="0.95" ry="0.55" transform="rotate(34 194.6 143.4)" fill="none" stroke="#6a6a6a" stroke-width="0.45"/><ellipse cx="162.5" cy="143.8" rx="0.95" ry="0.55" transform="rotate(127 162.5 143.8)" fill="none" stroke="#6a6a6a" stroke-width="0.45"/><ellipse cx="194.9" cy="128.5" rx="0.95" ry="0.55" transform="rotate(46 194.9 128.5)" fill="none" stroke="#6a6a6a" stroke-width="0.45"/><ellipse cx="195.2" cy="142.0" rx="0.95" ry="0.55" transform="rotate(76 195.2 142.0)" fill="none" stroke="#6a6a6a" stroke-width="0.45"/><ellipse cx="187.9" cy="146.6" rx="0.95" ry="0.55" transform="rotate(17 187.9 146.6)" fill="none" stroke="#6a6a6a" stroke-width="0.45"/><ellipse cx="193.5" cy="142.0" rx="0.95" ry="0.55" transform="rotate(64 193.5 142.0)" fill="none" stroke="#6a6a6a" stroke-width="0.45"/><ellipse cx="179.8" cy="128.0" rx="0.95" ry="0.55" transform="rotate(1 179.8 128.0)" fill="none" stroke="#6a6a6a" stroke-width="0.45"/><ellipse cx="166.6" cy="136.0" rx="0.95" ry="0.55" transform="rotate(87 166.6 136.0)" fill="none" stroke="#6a6a6a" stroke-width="0.45"/><ellipse cx="159.8" cy="133.7" rx="0.95" ry="0.55" transform="rotate(172 159.8 133.7)" fill="none" stroke="#6a6a6a" stroke-width="0.45"/><ellipse cx="169.6" cy="132.2" rx="0.95" ry="0.55" transform="rotate(21 169.6 132.2)" fill="none" stroke="#6a6a6a" stroke-width="0.45"/><ellipse cx="163.3" cy="130.1" rx="0.95" ry="0.55" transform="rotate(20 163.3 130.1)" fill="none" stroke="#6a6a6a" stroke-width="0.45"/><ellipse cx="196.4" cy="130.0" rx="0.95" ry="0.55" transform="rotate(17 196.4 130.0)" fill="none" stroke="#6a6a6a" stroke-width="0.45"/><ellipse cx="199.3" cy="142.8" rx="0.95" ry="0.55" transform="rotate(139 199.3 142.8)" fill="none" stroke="#6a6a6a" stroke-width="0.45"/><ellipse cx="189.4" cy="140.9" rx="0.95" ry="0.55" transform="rotate(122 189.4 140.9)" fill="none" stroke="#6a6a6a" stroke-width="0.45"/><ellipse cx="183.8" cy="124.8" rx="0.95" ry="0.55" transform="rotate(48 183.8 124.8)" fill="none" stroke="#6a6a6a" stroke-width="0.45"/><ellipse cx="189.2" cy="122.6" rx="0.95" ry="0.55" transform="rotate(121 189.2 122.6)" fill="none" stroke="#6a6a6a" stroke-width="0.45"/><ellipse cx="177.5" cy="145.4" rx="0.95" ry="0.55" transform="rotate(89 177.5 145.4)" fill="none" stroke="#6a6a6a" stroke-width="0.45"/><ellipse cx="167.5" cy="127.3" rx="0.95" ry="0.55" transform="rotate(122 167.5 127.3)" fill="none" stroke="#6a6a6a" stroke-width="0.45"/><ellipse cx="179.1" cy="143.3" rx="0.95" ry="0.55" transform="rotate(116 179.1 143.3)" fill="none" stroke="#6a6a6a" stroke-width="0.45"/><ellipse cx="182.6" cy="143.5" rx="0.95" ry="0.55" transform="rotate(160 182.6 143.5)" fill="none" stroke="#6a6a6a" stroke-width="0.45"/><ellipse cx="183.9" cy="145.3" rx="0.95" ry="0.55" transform="rotate(168 183.9 145.3)" fill="none" stroke="#6a6a6a" stroke-width="0.45"/><ellipse cx="156.1" cy="141.5" rx="0.95" ry="0.55" transform="rotate(130 156.1 141.5)" fill="none" stroke="#6a6a6a" stroke-width="0.45"/><ellipse cx="180.8" cy="131.8" rx="0.95" ry="0.55" transform="rotate(117 180.8 131.8)" fill="none" stroke="#6a6a6a" stroke-width="0.45"/><ellipse cx="173.2" cy="139.2" rx="0.95" ry="0.55" transform="rotate(32 173.2 139.2)" fill="none" stroke="#6a6a6a" stroke-width="0.45"/><ellipse cx="152.2" cy="136.5" rx="0.95" ry="0.55" transform="rotate(136 152.2 136.5)" fill="none" stroke="#6a6a6a" stroke-width="0.45"/><ellipse cx="177.8" cy="125.8" rx="0.95" ry="0.55" transform="rotate(65 177.8 125.8)" fill="none" stroke="#6a6a6a" stroke-width="0.45"/><ellipse cx="162.9" cy="138.2" rx="0.95" ry="0.55" transform="rotate(157 162.9 138.2)" fill="none" stroke="#6a6a6a" stroke-width="0.45"/><ellipse cx="150.8" cy="141.5" rx="0.95" ry="0.55" transform="rotate(44 150.8 141.5)" fill="none" stroke="#6a6a6a" stroke-width="0.45"/><ellipse cx="190.0" cy="139.5" rx="0.95" ry="0.55" transform="rotate(60 190.0 139.5)" fill="none" stroke="#6a6a6a" stroke-width="0.45"/><ellipse cx="170.3" cy="132.2" rx="0.95" ry="0.55" transform="rotate(139 170.3 132.2)" fill="none" stroke="#6a6a6a" stroke-width="0.45"/><ellipse cx="167.6" cy="123.4" rx="0.95" ry="0.55" transform="rotate(20 167.6 123.4)" fill="none" stroke="#6a6a6a" stroke-width="0.45"/><ellipse cx="163.1" cy="146.2" rx="0.95" ry="0.55" transform="rotate(20 163.1 146.2)" fill="none" stroke="#6a6a6a" stroke-width="0.45"/><ellipse cx="190.6" cy="129.7" rx="0.95" ry="0.55" transform="rotate(33 190.6 129.7)" fill="none" stroke="#6a6a6a" stroke-width="0.45"/><ellipse cx="158.7" cy="138.5" rx="0.95" ry="0.55" transform="rotate(134 158.7 138.5)" fill="none" stroke="#6a6a6a" stroke-width="0.45"/><ellipse cx="192.6" cy="130.3" rx="0.95" ry="0.55" transform="rotate(107 192.6 130.3)" fill="none" stroke="#6a6a6a" stroke-width="0.45"/><ellipse cx="156.4" cy="139.8" rx="0.95" ry="0.55" transform="rotate(35 156.4 139.8)" fill="none" stroke="#6a6a6a" stroke-width="0.45"/><ellipse cx="177.0" cy="131.1" rx="0.95" ry="0.55" transform="rotate(36 177.0 131.1)" fill="none" stroke="#6a6a6a" stroke-width="0.45"/><ellipse cx="162.0" cy="127.4" rx="0.95" ry="0.55" transform="rotate(5 162.0 127.4)" fill="none" stroke="#6a6a6a" stroke-width="0.45"/><ellipse cx="191.9" cy="126.2" rx="0.95" ry="0.55" transform="rotate(171 191.9 126.2)" fill="none" stroke="#6a6a6a" stroke-width="0.45"/><ellipse cx="169.2" cy="132.0" rx="0.95" ry="0.55" transform="rotate(105 169.2 132.0)" fill="none" stroke="#6a6a6a" stroke-width="0.45"/><ellipse cx="182.7" cy="119.3" rx="0.95" ry="0.55" transform="rotate(124 182.7 119.3)" fill="none" stroke="#6a6a6a" stroke-width="0.45"/><ellipse cx="164.7" cy="124.0" rx="0.95" ry="0.55" transform="rotate(87 164.7 124.0)" fill="none" stroke="#6a6a6a" stroke-width="0.45"/><ellipse cx="181.0" cy="126.5" rx="0.95" ry="0.55" transform="rotate(0 181.0 126.5)" fill="none" stroke="#6a6a6a" stroke-width="0.45"/><ellipse cx="190.1" cy="131.2" rx="0.95" ry="0.55" transform="rotate(89 190.1 131.2)" fill="none" stroke="#6a6a6a" stroke-width="0.45"/><ellipse cx="176.8" cy="134.5" rx="0.95" ry="0.55" transform="rotate(35 176.8 134.5)" fill="none" stroke="#6a6a6a" stroke-width="0.45"/><ellipse cx="177.1" cy="147.8" rx="0.95" ry="0.55" transform="rotate(90 177.1 147.8)" fill="none" stroke="#6a6a6a" stroke-width="0.45"/><ellipse cx="183.4" cy="135.6" rx="0.95" ry="0.55" transform="rotate(102 183.4 135.6)" fill="none" stroke="#6a6a6a" stroke-width="0.45"/><ellipse cx="200.3" cy="135.9" rx="0.95" ry="0.55" transform="rotate(24 200.3 135.9)" fill="none" stroke="#6a6a6a" stroke-width="0.45"/><ellipse cx="191.3" cy="132.8" rx="0.95" ry="0.55" transform="rotate(9 191.3 132.8)" fill="none" stroke="#6a6a6a" stroke-width="0.45"/><ellipse cx="167.9" cy="141.9" rx="0.95" ry="0.55" transform="rotate(14 167.9 141.9)" fill="none" stroke="#6a6a6a" stroke-width="0.45"/><ellipse cx="177.6" cy="119.8" rx="0.95" ry="0.55" transform="rotate(58 177.6 119.8)" fill="none" stroke="#6a6a6a" stroke-width="0.45"/><ellipse cx="195.5" cy="133.7" rx="0.95" ry="0.55" transform="rotate(24 195.5 133.7)" fill="none" stroke="#6a6a6a" stroke-width="0.45"/><ellipse cx="194.8" cy="135.3" rx="0.95" ry="0.55" transform="rotate(167 194.8 135.3)" fill="none" stroke="#6a6a6a" stroke-width="0.45"/><ellipse cx="187.2" cy="127.8" rx="0.95" ry="0.55" transform="rotate(62 187.2 127.8)" fill="none" stroke="#6a6a6a" stroke-width="0.45"/><ellipse cx="192.1" cy="125.3" rx="0.95" ry="0.55" transform="rotate(155 192.1 125.3)" fill="none" stroke="#6a6a6a" stroke-width="0.45"/><ellipse cx="172.1" cy="125.3" rx="0.95" ry="0.55" transform="rotate(87 172.1 125.3)" fill="none" stroke="#6a6a6a" stroke-width="0.45"/><ellipse cx="154.4" cy="148.1" rx="0.95" ry="0.55" transform="rotate(14 154.4 148.1)" fill="none" stroke="#6a6a6a" stroke-width="0.45"/><ellipse cx="159.3" cy="144.9" rx="0.95" ry="0.55" transform="rotate(89 159.3 144.9)" fill="none" stroke="#6a6a6a" stroke-width="0.45"/><ellipse cx="186.3" cy="133.4" rx="0.95" ry="0.55" transform="rotate(76 186.3 133.4)" fill="none" stroke="#6a6a6a" stroke-width="0.45"/><ellipse cx="183.6" cy="139.8" rx="0.95" ry="0.55" transform="rotate(84 183.6 139.8)" fill="none" stroke="#6a6a6a" stroke-width="0.45"/><ellipse cx="189.4" cy="138.0" rx="0.95" ry="0.55" transform="rotate(33 189.4 138.0)" fill="none" stroke="#6a6a6a" stroke-width="0.45"/><ellipse cx="197.1" cy="134.5" rx="0.95" ry="0.55" transform="rotate(66 197.1 134.5)" fill="none" stroke="#6a6a6a" stroke-width="0.45"/><ellipse cx="168.5" cy="132.9" rx="0.95" ry="0.55" transform="rotate(107 168.5 132.9)" fill="none" stroke="#6a6a6a" stroke-width="0.45"/><ellipse cx="160.6" cy="148.9" rx="0.95" ry="0.55" transform="rotate(38 160.6 148.9)" fill="none" stroke="#6a6a6a" stroke-width="0.45"/><ellipse cx="190.8" cy="145.2" rx="0.95" ry="0.55" transform="rotate(83 190.8 145.2)" fill="none" stroke="#6a6a6a" stroke-width="0.45"/><ellipse cx="159.0" cy="143.7" rx="0.95" ry="0.55" transform="rotate(31 159.0 143.7)" fill="none" stroke="#6a6a6a" stroke-width="0.45"/><ellipse cx="170.3" cy="143.8" rx="0.95" ry="0.55" transform="rotate(5 170.3 143.8)" fill="none" stroke="#6a6a6a" stroke-width="0.45"/><ellipse cx="154.4" cy="145.5" rx="0.95" ry="0.55" transform="rotate(88 154.4 145.5)" fill="none" stroke="#6a6a6a" stroke-width="0.45"/><ellipse cx="151.7" cy="148.6" rx="0.95" ry="0.55" transform="rotate(81 151.7 148.6)" fill="none" stroke="#6a6a6a" stroke-width="0.45"/><ellipse cx="170.5" cy="127.2" rx="0.95" ry="0.55" transform="rotate(9 170.5 127.2)" fill="none" stroke="#6a6a6a" stroke-width="0.45"/><ellipse cx="170.3" cy="136.7" rx="0.95" ry="0.55" transform="rotate(5 170.3 136.7)" fill="none" stroke="#6a6a6a" stroke-width="0.45"/><ellipse cx="200.6" cy="146.0" rx="0.95" ry="0.55" transform="rotate(17 200.6 146.0)" fill="none" stroke="#6a6a6a" stroke-width="0.45"/><ellipse cx="174.1" cy="143.8" rx="0.95" ry="0.55" transform="rotate(112 174.1 143.8)" fill="none" stroke="#6a6a6a" stroke-width="0.45"/><ellipse cx="167.2" cy="145.3" rx="0.95" ry="0.55" transform="rotate(9 167.2 145.3)" fill="none" stroke="#6a6a6a" stroke-width="0.45"/><ellipse cx="187.8" cy="141.2" rx="0.95" ry="0.55" transform="rotate(142 187.8 141.2)" fill="none" stroke="#6a6a6a" stroke-width="0.45"/><ellipse cx="173.6" cy="119.7" rx="0.95" ry="0.55" transform="rotate(54 173.6 119.7)" fill="none" stroke="#6a6a6a" stroke-width="0.45"/><ellipse cx="162.0" cy="141.7" rx="0.95" ry="0.55" transform="rotate(147 162.0 141.7)" fill="none" stroke="#6a6a6a" stroke-width="0.45"/><ellipse cx="182.5" cy="138.5" rx="0.95" ry="0.55" transform="rotate(17 182.5 138.5)" fill="none" stroke="#6a6a6a" stroke-width="0.45"/><ellipse cx="185.3" cy="120.4" rx="0.95" ry="0.55" transform="rotate(107 185.3 120.4)" fill="none" stroke="#6a6a6a" stroke-width="0.45"/><ellipse cx="148.7" cy="148.7" rx="0.95" ry="0.55" transform="rotate(16 148.7 148.7)" fill="none" stroke="#6a6a6a" stroke-width="0.45"/><ellipse cx="157.7" cy="148.1" rx="0.95" ry="0.55" transform="rotate(10 157.7 148.1)" fill="none" stroke="#6a6a6a" stroke-width="0.45"/><ellipse cx="183.8" cy="121.9" rx="0.95" ry="0.55" transform="rotate(36 183.8 121.9)" fill="none" stroke="#6a6a6a" stroke-width="0.45"/><ellipse cx="201.1" cy="142.9" rx="0.95" ry="0.55" transform="rotate(145 201.1 142.9)" fill="none" stroke="#6a6a6a" stroke-width="0.45"/><ellipse cx="198.0" cy="131.4" rx="0.95" ry="0.55" transform="rotate(6 198.0 131.4)" fill="none" stroke="#6a6a6a" stroke-width="0.45"/><ellipse cx="165.0" cy="131.3" rx="0.95" ry="0.55" transform="rotate(170 165.0 131.3)" fill="none" stroke="#6a6a6a" stroke-width="0.45"/><ellipse cx="153.2" cy="143.4" rx="0.95" ry="0.55" transform="rotate(153 153.2 143.4)" fill="none" stroke="#6a6a6a" stroke-width="0.45"/><ellipse cx="154.7" cy="140.8" rx="0.95" ry="0.55" transform="rotate(60 154.7 140.8)" fill="none" stroke="#6a6a6a" stroke-width="0.45"/><ellipse cx="185.2" cy="121.6" rx="0.95" ry="0.55" transform="rotate(31 185.2 121.6)" fill="none" stroke="#6a6a6a" stroke-width="0.45"/><ellipse cx="188.4" cy="128.5" rx="0.95" ry="0.55" transform="rotate(150 188.4 128.5)" fill="none" stroke="#6a6a6a" stroke-width="0.45"/><ellipse cx="178.4" cy="120.1" rx="0.95" ry="0.55" transform="rotate(65 178.4 120.1)" fill="none" stroke="#6a6a6a" stroke-width="0.45"/><ellipse cx="170.9" cy="141.9" rx="0.95" ry="0.55" transform="rotate(140 170.9 141.9)" fill="none" stroke="#6a6a6a" stroke-width="0.45"/><ellipse cx="174.5" cy="140.5" rx="0.95" ry="0.55" transform="rotate(31 174.5 140.5)" fill="none" stroke="#6a6a6a" stroke-width="0.45"/><ellipse cx="187.4" cy="131.7" rx="0.95" ry="0.55" transform="rotate(128 187.4 131.7)" fill="none" stroke="#6a6a6a" stroke-width="0.45"/><ellipse cx="169.4" cy="134.0" rx="0.95" ry="0.55" transform="rotate(28 169.4 134.0)" fill="none" stroke="#6a6a6a" stroke-width="0.45"/><ellipse cx="186.9" cy="148.3" rx="0.95" ry="0.55" transform="rotate(84 186.9 148.3)" fill="none" stroke="#6a6a6a" stroke-width="0.45"/><ellipse cx="189.5" cy="130.5" rx="0.95" ry="0.55" transform="rotate(17 189.5 130.5)" fill="none" stroke="#6a6a6a" stroke-width="0.45"/><g fill="#9a9a9a"><ellipse cx="378.2" cy="99.8" rx="3.4" ry="3.7"/><path d="M360.6 90.8 L374.5 102.2 L376.0 103.5 L381.0 104.0 L389.7 101.2 L397.0 97.5 L401.3 94.8 L402.0 99.5 L401.0 104.0 L399.5 108.0 L394.5 113.3 L390.0 114.8 L386.5 114.5 L384.2 112.0 L384.8 116.5 L386.9 120.2 L385.8 122.2 L388.0 123.8 L393.8 123.4 L396.8 127.8 L395.6 128.8 L393.0 126.0 L386.5 126.2 L385.5 127.7 L384.0 131.0 L382.5 135.5 L384.0 145.5 L382.8 146.0 L379.8 135.5 L376.0 135.3 L374.8 131.5 L371.2 129.2 L373.2 122.0 L373.2 115.0 L372.8 107.5 L372.5 105.6 L360.0 92.2Z" stroke="#9a9a9a" stroke-width="0.6" stroke-linejoin="round"/></g><circle cx="395.9" cy="148.7" r="0.63" fill="#9a9a9a"/><circle cx="397.2" cy="138.4" r="0.66" fill="#9a9a9a"/><circle cx="401.9" cy="131.2" r="0.53" fill="#9a9a9a"/><circle cx="392.3" cy="165.2" r="0.38" fill="#9a9a9a"/><circle cx="410.3" cy="118.5" r="0.72" fill="#9a9a9a"/><circle cx="384.0" cy="160.1" r="0.39" fill="#9a9a9a"/><circle cx="387.3" cy="153.4" r="0.63" fill="#9a9a9a"/><circle cx="399.0" cy="145.3" r="0.73" fill="#9a9a9a"/><circle cx="397.9" cy="141.6" r="0.52" fill="#9a9a9a"/><circle cx="410.9" cy="119.5" r="0.77" fill="#9a9a9a"/><circle cx="389.4" cy="149.5" r="0.39" fill="#9a9a9a"/><circle cx="399.6" cy="131.6" r="0.58" fill="#9a9a9a"/><circle cx="408.4" cy="113.2" r="0.48" fill="#9a9a9a"/><circle cx="403.0" cy="125.5" r="0.59" fill="#9a9a9a"/><circle cx="389.9" cy="167.0" r="0.51" fill="#9a9a9a"/><circle cx="386.6" cy="168.1" r="0.80" fill="#9a9a9a"/><circle cx="386.1" cy="157.9" r="0.39" fill="#9a9a9a"/><circle cx="397.5" cy="127.1" r="0.62" fill="#9a9a9a"/><circle cx="393.2" cy="154.4" r="0.74" fill="#9a9a9a"/><circle cx="388.1" cy="159.1" r="0.51" fill="#9a9a9a"/><circle cx="408.1" cy="115.6" r="0.88" fill="#9a9a9a"/><circle cx="389.5" cy="160.6" r="0.74" fill="#9a9a9a"/><circle cx="394.7" cy="159.9" r="0.50" fill="#9a9a9a"/><circle cx="398.9" cy="125.8" r="0.39" fill="#9a9a9a"/><circle cx="389.6" cy="160.7" r="0.71" fill="#9a9a9a"/><circle cx="393.1" cy="153.3" r="0.64" fill="#9a9a9a"/><circle cx="401.7" cy="135.0" r="0.44" fill="#9a9a9a"/><circle cx="407.2" cy="118.3" r="0.46" fill="#9a9a9a"/><circle cx="405.6" cy="126.5" r="0.92" fill="#9a9a9a"/><circle cx="404.1" cy="121.3" r="0.41" fill="#9a9a9a"/><circle cx="421.2" cy="170" r="1.1" fill="#5aa8ea"/><path d="M360.7 89l0.6 1.2 1.3 0.2-1 0.9 0.3 1.3-1.2-0.7-1.2 0.7 0.3-1.3-1-0.9 1.3-0.2z" fill="#9a9a9a"/><defs><clipPath id="gc"><circle cx="271.5" cy="302.2" r="57"/></clipPath></defs><g clip-path="url(#gc)" fill="#000"><path d="M227.9 266.5 L231.9 271.1 L233.2 277.8 L232.5 284.4 L235.2 291.0 L236.5 296.3 L241.8 299.6 L250.4 298.3 L253.0 300.8 L255.8 306.5 L255.1 313.5 L251.5 319.2 L247.3 323.4 L240.2 324.1 L234.6 322.0 L226.1 319.9 L219.0 319.9 L200.0 320.0 L200.0 250.0 L227.9 250.0Z"/><path d="M219.0 322.5 L224.0 324.0 L229.0 326.5 L234.0 328.5 L238.0 326.0 L243.0 327.0 L247.0 331.0 L249.0 336.0 L246.0 340.0 L240.0 341.5 L232.0 341.5 L226.0 340.0 L220.0 338.0 L200.0 345.0 L200.0 325.0Z"/><path d="M251.5 353.8 L257.2 351.0 L265.7 347.4 L269.9 345.3 L272.0 344.6 L275.0 350.0 L278.5 357.3 L287.0 356.0 L300.0 352.0 L340.0 352.0 L340.0 380.0 L240.0 380.0Z"/><path d="M289.9 249.0 L293.8 249.5 L297.2 255.2 L297.8 264.5 L297.8 273.8 L301.8 280.4 L305.8 287.0 L306.4 295.0 L305.8 300.3 L303.9 301.5 L296.5 302.0 L291.2 300.3 L285.9 297.6 L284.6 293.0 L278.0 291.0 L272.0 287.0 L272.6 281.7 L276.0 275.1 L280.6 273.1 L283.2 267.8 L287.2 263.2 L289.2 256.6Z"/><path d="M340.0 300.0 L325.0 303.6 L312.4 302.2 L309.5 305.0 L312.4 307.9 L318.0 310.7 L316.6 316.4 L308.1 319.2 L303.9 322.7 L298.2 327.7 L289.8 331.9 L282.7 336.1 L281.3 340.4 L286.9 344.6 L295.4 340.4 L301.1 343.2 L299.7 347.4 L291.2 348.8 L284.1 347.4 L281.3 350.3 L287.0 352.4 L298.2 350.3 L340.0 350.0Z"/><rect x="301" y="314" width="2" height="1"/><rect x="307" y="312" width="3" height="1.5"/><rect x="289" y="336" width="2" height="2"/><rect x="296" y="345" width="2" height="1.5"/><rect x="228" y="329" width="3" height="1.5" fill="#fff"/><rect x="236" y="331" width="2" height="2" fill="#fff"/><rect x="241" y="333" width="3" height="1.2" fill="#fff"/><rect x="231" y="335" width="2.5" height="1.5" fill="#fff"/><rect x="223" y="333" width="2" height="1.2" fill="#fff"/><rect x="244" y="337" width="1.5" height="1.5" fill="#fff"/></g><circle cx="271.5" cy="302.2" r="57" fill="none" stroke="#000" stroke-width="2.2"/><rect x="321.3" y="188.7" width="85" height="38.5" fill="none" stroke="#8a8af0" stroke-width="0.8" stroke-dasharray="2 1.5"/><g transform="translate(317.8 184.8) rotate(-45)"><path d="M-1.1 -1.8 h2.2 v3.6 h-2.2z M-2.4 -1.4 L0 -4 L2.4 -1.4z M-2.4 1.4 L0 4 L2.4 1.4z" fill="#000"/></g><g transform="translate(364.1 182.6) rotate(0)"><path d="M-1.1 -1.8 h2.2 v3.6 h-2.2z M-2.4 -1.4 L0 -4 L2.4 -1.4z M-2.4 1.4 L0 4 L2.4 1.4z" fill="#000"/></g><g transform="translate(410.4 184.8) rotate(45)"><path d="M-1.1 -1.8 h2.2 v3.6 h-2.2z M-2.4 -1.4 L0 -4 L2.4 -1.4z M-2.4 1.4 L0 4 L2.4 1.4z" fill="#000"/></g><g transform="translate(315.6 208.2) rotate(90)"><path d="M-1.1 -1.8 h2.2 v3.6 h-2.2z M-2.4 -1.4 L0 -4 L2.4 -1.4z M-2.4 1.4 L0 4 L2.4 1.4z" fill="#000"/></g><g transform="translate(412.5 208.2) rotate(90)"><path d="M-1.1 -1.8 h2.2 v3.6 h-2.2z M-2.4 -1.4 L0 -4 L2.4 -1.4z M-2.4 1.4 L0 4 L2.4 1.4z" fill="#000"/></g><g transform="translate(317.8 231.6) rotate(45)"><path d="M-1.1 -1.8 h2.2 v3.6 h-2.2z M-2.4 -1.4 L0 -4 L2.4 -1.4z M-2.4 1.4 L0 4 L2.4 1.4z" fill="#000"/></g><g transform="translate(364.1 233.7) rotate(0)"><path d="M-1.1 -1.8 h2.2 v3.6 h-2.2z M-2.4 -1.4 L0 -4 L2.4 -1.4z M-2.4 1.4 L0 4 L2.4 1.4z" fill="#000"/></g><g transform="translate(410.4 231.6) rotate(-45)"><path d="M-1.1 -1.8 h2.2 v3.6 h-2.2z M-2.4 -1.4 L0 -4 L2.4 -1.4z M-2.4 1.4 L0 4 L2.4 1.4z" fill="#000"/></g></svg></div>
<div class="t" style="left:321.70px;top:189.70px;width:83.30px;height:9.10px;"><div style="position:absolute;left:0;top:0;width:83.30px;height:9.10px;transform:rotate(180deg);"><svg style="left:0;top:0" width="83.30" height="9.10" viewBox="0 0 83.30 9.10"><text x="0" y="9.10" textLength="83.30" lengthAdjust="spacingAndGlyphs" font-family="Liberation Serif" font-size="11" fill="#4a4a4a">A<tspan font-size="7.5">nnées</tspan> 2025/2026</text></svg></div></div>
<div class="t" style="left:347.00px;top:203.40px;width:52.40px;height:8.50px;"><div style="position:absolute;left:0;top:0;width:52.40px;height:8.50px;transform:rotate(180deg);"><svg style="left:0;top:0" width="52.40" height="8.50" viewBox="0 0 52.40 8.50"><text x="0" y="8.50" textLength="52.40" lengthAdjust="spacingAndGlyphs" font-family="Liberation Serif" font-size="11" fill="#4a4a4a">Cl<tspan font-size="7.5">asse</tspan> CM 1</text></svg></div></div>
<div class="t" style="left:325.80px;top:216.50px;width:79.10px;height:8.70px;"><div style="position:absolute;left:0;top:0;width:79.10px;height:8.70px;transform:rotate(180deg);"><svg style="left:0;top:0" width="79.10" height="8.70" viewBox="0 0 79.10 8.70"><text x="0" y="8.70" textLength="79.10" lengthAdjust="spacingAndGlyphs" font-family="Liberation Serif" font-size="11" fill="#4a4a4a">École Jean Rostand</text></svg></div></div>
<div class="t" style="left:163.80px;top:188.90px;width:35.00px;height:7.70px;"><div style="position:absolute;left:0;top:0;width:35.00px;height:7.70px;transform:rotate(180deg);"><svg style="left:0;top:0" width="35.00" height="7.70" viewBox="0 0 35.00 7.70"><text x="0" y="7.70" textLength="35.00" lengthAdjust="spacingAndGlyphs" font-family="Liberation Serif" font-size="10" fill="#505050">Rennes 2</text></svg></div></div>
<div class="t" style="left:156.10px;top:201.50px;width:50.00px;height:7.30px;"><div style="position:absolute;left:0;top:0;width:50.00px;height:7.30px;transform:rotate(180deg);"><svg style="left:0;top:0" width="50.00" height="7.30" viewBox="0 0 50.00 7.30"><text x="0" y="7.30" textLength="50.00" lengthAdjust="spacingAndGlyphs" font-family="Liberation Serif" font-size="10.5" fill="#505050">DEUST MBD</text></svg></div></div>
<div class="r" style="left:15.60px;top:401.30px;width:538.00px;height:12.50px;background:#2e2e2e;"></div>
<div class="r" style="left:184.00px;top:403.70px;width:218.00px;height:4.50px;background:#a8a8a8;border-radius:3px;"></div>
<div class="r" style="left:542.00px;top:76.00px;width:12.00px;height:338.00px;background:#2f2f2f;"></div>
<div class="r" style="left:546.00px;top:225.40px;width:5.00px;height:37.50px;background:#a8a8a8;border-radius:3px;"></div>
<div class="r" style="left:553.80px;top:76.00px;width:7.20px;height:338.00px;background:#343434;"></div>
<svg style="left:544.20px;top:77.00px" width="10" height="10" viewBox="0 0 12 12"><rect x="1" y="1.5" width="8" height="5.5" rx="0.8" fill="none" stroke="#ddd" stroke-width="0.9"/><path d="M3.5 9h3M5 7v2" stroke="#ddd" stroke-width="0.9"/></svg>
<div class="r" style="left:546.80px;top:406.30px;width:2.60px;height:2.60px;background:#e8e8e8;border-radius:50%;"></div>
<div class="r" style="left:556.90px;top:241.80px;width:1.40px;height:1.40px;background:#c8c8c8;border-radius:50%;"></div>
<div class="r" style="left:556.90px;top:244.60px;width:1.40px;height:1.40px;background:#c8c8c8;border-radius:50%;"></div>
<div class="r" style="left:556.90px;top:247.40px;width:1.40px;height:1.40px;background:#c8c8c8;border-radius:50%;"></div>
<div class="r" style="left:562.00px;top:76.00px;width:238.00px;height:338.00px;background:#2d2d2d;"></div>
<div class="r" style="left:562.00px;top:76.00px;width:238.00px;height:2.80px;background:#353535;"></div>
<div class="r" style="left:796.70px;top:76.00px;width:3.30px;height:338.00px;background:#323232;"></div>
<div class="r" style="left:562.00px;top:78.80px;width:234.70px;height:20.00px;background:#262626;"></div>
<div class="r" style="left:565.90px;top:82.20px;width:83.50px;height:16.00px;background:#2f2f2f;"></div>
<div class="r" style="left:565.90px;top:97.00px;width:83.50px;height:2.10px;background:#1f5db4;"></div>
<div class="r" style="left:562.00px;top:98.20px;width:238.00px;height:0.80px;background:#222;"></div>
<svg style="left:571.25px;top:83.10px" width="11" height="11" viewBox="0 0 12 12"><path d="M2 10V2.5h6" fill="none" stroke="#e0e0e0" stroke-width="0.9"/><path d="M3.5 9L9.5 2.5" stroke="#e0e0e0" stroke-width="1.3"/><path d="M2 11l2-2" stroke="#2a9bea" stroke-width="1.5"/></svg>
<div class="t" style="left:583.75px;top:85.52px;font-size:6.8px;color:#e2e2e2;font-weight:400;">Fond et contour</div>
<svg style="left:632.60px;top:84.00px" width="10" height="10" viewBox="0 0 12 12"><path d="M3.5 3.5l5 5M8.5 3.5l-5 5" stroke="#aaa" stroke-width="0.9"/></svg>
<div class="r" style="left:780.10px;top:80.50px;width:16.00px;height:16.50px;background:#2b2b2b;border-radius:3px;"></div>
<svg style="left:783.10px;top:83.00px" width="11" height="11" viewBox="0 0 12 12"><path d="M3 4.5l3 3 3-3" fill="none" stroke="#aaa" stroke-width="1"/></svg>
<div class="r" style="left:562.00px;top:99.00px;width:234.70px;height:15.70px;background:#2a2a2a;"></div>
<div class="r" style="left:566.00px;top:113.20px;width:34.40px;height:2.00px;background:#1f5db4;"></div>
<div class="r" style="left:570.50px;top:103.80px;width:7.00px;height:7.00px;background:#e8e8e8;"></div>
<div class="t" style="left:581.00px;top:104.62px;font-size:6.8px;color:#e2e2e2;font-weight:400;">Fond</div>
<div class="r" style="left:609.50px;top:104.00px;width:7.00px;height:7.00px;background:transparent;border:1px solid #ddd;"></div>
<div class="t" style="left:620.00px;top:104.62px;font-size:6.8px;color:#e2e2e2;font-weight:400;">Contour</div>
<svg style="left:655.25px;top:102.40px" width="11" height="11" viewBox="0 0 12 12"><path d="M1.5 3.5h7" stroke="#2a9bea" stroke-width="1"/><path d="M7 2l2 1.5-2 1.5z" fill="#2a9bea"/><path d="M1.5 6.5h3M6 6.5h4.5" stroke="#e0e0e0" stroke-width="0.9"/><path d="M1.5 9.5h9" stroke="#e0e0e0" stroke-width="0.9"/></svg>
<div class="t" style="left:668.00px;top:104.62px;font-size:6.8px;color:#e2e2e2;font-weight:400;">Style du contour</div>
<div class="r" style="left:562.00px;top:115.50px;width:238.00px;height:0.80px;background:#262626;"></div>
<svg style="left:566.50px;top:119.90px" width="11" height="11" viewBox="0 0 12 12"><path d="M3.5 3.5l5 5M8.5 3.5l-5 5" stroke="#e0e0e0" stroke-width="1.2"/></svg>
<div class="r" style="left:581.00px;top:118.20px;width:13.60px;height:14.20px;background:#1d3a5c;border-radius:2px;border:0.8px solid #18304c;"></div>
<div class="r" style="left:583.50px;top:120.80px;width:8.60px;height:9.00px;background:#1ea0ef;"></div>
<div class="r" style="left:598.6px;top:121px;width:8.8px;height:8.8px;background:linear-gradient(90deg,#1ea0ef,#e8f4fc);"></div>
<div class="r" style="left:614.2px;top:121px;width:8.8px;height:8.8px;background:radial-gradient(circle,#1ea0ef 20%,#e8f4fc 90%);"></div>
<div class="r" style="left:629.6px;top:121px;width:8.8px;height:8.8px;background:linear-gradient(135deg,#e8f4fc 10%,#1ea0ef 50%,#e8f4fc 90%);"></div>
<svg style="left:644.10px;top:119.90px" width="11" height="11" viewBox="0 0 12 12"><rect x="1.5" y="1.5" width="9" height="9" fill="#3a3a3a"/><circle cx="2.5" cy="2.5" r="1.35" fill="#f0f0f0"/><circle cx="2.5" cy="6.0" r="1.35" fill="#f0f0f0"/><circle cx="2.5" cy="9.5" r="1.35" fill="#f0f0f0"/><circle cx="6.0" cy="2.5" r="1.35" fill="#f0f0f0"/><circle cx="6.0" cy="6.0" r="1.35" fill="#f0f0f0"/><circle cx="6.0" cy="9.5" r="1.35" fill="#f0f0f0"/><circle cx="9.5" cy="2.5" r="1.35" fill="#f0f0f0"/><circle cx="9.5" cy="6.0" r="1.35" fill="#f0f0f0"/><circle cx="9.5" cy="9.5" r="1.35" fill="#f0f0f0"/><path d="M1.5 6h9M6 1.5v9" stroke="#e0e0e0" stroke-width="0.7"/></svg>
<div class="r" style="left:660.50px;top:120.80px;width:9.30px;height:9.30px;background:transparent;border:1px solid #ccc;"></div>
<div class="r" style="left:662.50px;top:122.80px;width:5.30px;height:5.30px;background:#1ea0ef;"></div>
<div class="t" style="left:677.80px;top:120.74px;font-size:10.5px;color:#e8e8e8;font-weight:700;">?</div>
<svg style="left:765.00px;top:120.00px" width="11" height="11" viewBox="0 0 12 12"><path fill-rule="evenodd" d="M1.3 2.2 Q3.5 0.8 6 2.6 Q8.5 0.8 10.7 2.2 Q11 8.5 6 10.8 Q1 8.5 1.3 2.2z M6 4.2 Q4.3 6.5 4.6 7.6 Q6 9 7.4 7.6 Q7.7 6.5 6 4.2z" fill="#e0e0e0"/></svg>
<div class="r" style="left:778.90px;top:118.00px;width:14.50px;height:14.50px;background:#1f4a80;border-radius:3px;"></div>
<svg style="left:780.60px;top:119.90px" width="11" height="11" viewBox="0 0 12 12"><path d="M1.6 2.4 Q3.5 0.9 6 2.8 Q8.5 0.9 10.4 2.4 Q11 8.5 6 10.8 Q1 8.5 1.6 2.4z" fill="#e0e0e0"/></svg>
<div class="r" style="left:561.00px;top:77.25px;width:166.40px;height:63.75px;background:transparent;border:4.7px solid #fb2a06;"></div>
<svg class="tx" style="left:0;top:0" width="800" height="453"><text x="565.80" y="149.82" textLength="16.40" lengthAdjust="spacingAndGlyphs" font-family="Liberation Sans" font-size="7.2" font-weight="700" fill="#e6e6e6">Aplat</text></svg>
<div class="r" style="left:737.80px;top:138.60px;width:53.90px;height:17.80px;background:#2a2a2a;border-radius:3px;border:0.8px solid #232323;"></div>
<svg style="left:743.50px;top:143.00px" width="9" height="9" viewBox="0 0 9 9"><circle cx="4.5" cy="3" r="2.3" fill="#e83030"/><circle cx="3" cy="5.7" r="2.3" fill="#30d030" opacity="0.9"/><circle cx="6" cy="5.7" r="2.3" fill="#3050f0" opacity="0.85"/></svg>
<div class="t" style="left:756.50px;top:144.22px;font-size:6.8px;color:#ddd;font-weight:400;">RVB</div>
<svg style="left:779.50px;top:145.80px" width="6" height="4" viewBox="0 0 6 4"><path d="M0 0h6L3 3.5z" fill="#e0e0e0"/></svg>
<div class="t" style="left:567.50px;top:165.52px;font-size:6.8px;color:#cfcfcf;font-weight:400;">R :</div>
<div class="r" style="left:578.40px;top:159.30px;width:171.30px;height:19.00px;background:linear-gradient(90deg,#005050,#ff5050);"></div>
<div class="r" style="left:752.00px;top:158.80px;width:39.70px;height:20.00px;background:#2a2a2a;border-radius:3px;border:0.8px solid #252525;"></div>
<div class="t" style="left:755.30px;top:165.52px;font-size:6.8px;color:#e0e0e0;font-weight:400;">80</div>
<div class="r" style="left:773.00px;top:160.30px;width:0.70px;height:18.00px;background:#333;"></div>
<div class="r" style="left:781.30px;top:160.30px;width:0.70px;height:18.00px;background:#333;"></div>
<div class="r" style="left:774.30px;top:168.30px;width:5.80px;height:1.10px;background:#ddd;"></div>
<div class="r" style="left:783.60px;top:168.30px;width:5.80px;height:1.10px;background:#ddd;"></div>
<div class="r" style="left:785.95px;top:165.90px;width:1.10px;height:5.80px;background:#ddd;"></div>
<div class="t" style="left:567.50px;top:186.62px;font-size:6.8px;color:#cfcfcf;font-weight:400;">V :</div>
<div class="r" style="left:578.40px;top:180.40px;width:171.30px;height:19.00px;background:linear-gradient(90deg,#500050,#50ff50);"></div>
<div class="r" style="left:752.00px;top:179.90px;width:39.70px;height:20.00px;background:#2a2a2a;border-radius:3px;border:0.8px solid #252525;"></div>
<div class="t" style="left:755.30px;top:186.62px;font-size:6.8px;color:#e0e0e0;font-weight:400;">80</div>
<div class="r" style="left:773.00px;top:181.40px;width:0.70px;height:18.00px;background:#333;"></div>
<div class="r" style="left:781.30px;top:181.40px;width:0.70px;height:18.00px;background:#333;"></div>
<div class="r" style="left:774.30px;top:189.40px;width:5.80px;height:1.10px;background:#ddd;"></div>
<div class="r" style="left:783.60px;top:189.40px;width:5.80px;height:1.10px;background:#ddd;"></div>
<div class="r" style="left:785.95px;top:187.00px;width:1.10px;height:5.80px;background:#ddd;"></div>
<div class="t" style="left:567.50px;top:207.52px;font-size:6.8px;color:#cfcfcf;font-weight:400;">B :</div>
<div class="r" style="left:578.40px;top:201.30px;width:171.30px;height:19.00px;background:linear-gradient(90deg,#505000,#5050ff);"></div>
<div class="r" style="left:752.00px;top:200.80px;width:39.70px;height:20.00px;background:#2a2a2a;border-radius:3px;border:0.8px solid #252525;"></div>
<div class="t" style="left:755.30px;top:207.52px;font-size:6.8px;color:#e0e0e0;font-weight:400;">80</div>
<div class="r" style="left:773.00px;top:202.30px;width:0.70px;height:18.00px;background:#333;"></div>
<div class="r" style="left:781.30px;top:202.30px;width:0.70px;height:18.00px;background:#333;"></div>
<div class="r" style="left:774.30px;top:210.30px;width:5.80px;height:1.10px;background:#ddd;"></div>
<div class="r" style="left:783.60px;top:210.30px;width:5.80px;height:1.10px;background:#ddd;"></div>
<div class="r" style="left:785.95px;top:207.90px;width:1.10px;height:5.80px;background:#ddd;"></div>
<div class="t" style="left:567.50px;top:228.62px;font-size:6.8px;color:#cfcfcf;font-weight:400;">A :</div>
<div class="r" style="left:578.4px;top:222.4px;width:171.3px;height:19px;background:linear-gradient(90deg,rgba(80,80,80,0) 0%,rgba(80,80,80,1) 100%),conic-gradient(#737373 25%,#a6a6a6 0 50%,#737373 0 75%,#a6a6a6 0) 0 0/9.3px 9.3px;"></div>
<div class="r" style="left:752.00px;top:221.90px;width:39.70px;height:20.00px;background:#2a2a2a;border-radius:3px;border:0.8px solid #252525;"></div>
<div class="t" style="left:755.30px;top:228.62px;font-size:6.8px;color:#e0e0e0;font-weight:400;">100</div>
<div class="r" style="left:773.00px;top:223.40px;width:0.70px;height:18.00px;background:#333;"></div>
<div class="r" style="left:781.30px;top:223.40px;width:0.70px;height:18.00px;background:#333;"></div>
<div class="r" style="left:774.30px;top:231.40px;width:5.80px;height:1.10px;background:#ddd;"></div>
<div class="r" style="left:783.60px;top:231.40px;width:5.80px;height:1.10px;background:#555;"></div>
<div class="r" style="left:785.95px;top:229.00px;width:1.10px;height:5.80px;background:#555;"></div>
<svg style="left:0.00px;top:0.00px" width="800" height="453" viewBox="0 0 800 453"><path d="M629.2 159.3 h4 l-2 2.2z" fill="#f0f0f0"/><path d="M629.2 178.3 h4 l-2 -2.2z" fill="#f0f0f0"/><path d="M629.2 180.4 h4 l-2 2.2z" fill="#f0f0f0"/><path d="M629.2 199.4 h4 l-2 -2.2z" fill="#f0f0f0"/><path d="M629.2 201.3 h4 l-2 2.2z" fill="#f0f0f0"/><path d="M629.2 220.3 h4 l-2 -2.2z" fill="#f0f0f0"/><path d="M747.2 222.4 h2.5 v2.5z" fill="#f0f0f0"/><path d="M747.2 241.4 h2.5 v-2.5z" fill="#f0f0f0"/></svg>
<div class="r" style="left:561.50px;top:141.00px;width:260.00px;height:212.00px;background:transparent;border:0.8px solid #262626;border-top:none;"></div>
<svg style="left:565.00px;top:336.50px" width="10" height="10" viewBox="0 0 10 10"><circle cx="5" cy="3.2" r="2" fill="#666" /><circle cx="3.3" cy="6" r="2" fill="#4a8a4a" opacity="0.9"/><circle cx="6.7" cy="6" r="2" fill="#a04a8a" opacity="0.9"/></svg>
<svg style="left:576.00px;top:336.50px" width="10" height="10" viewBox="0 0 10 10"><circle cx="4.6" cy="4.6" r="3.6" fill="none" stroke="#666" stroke-width="0.8"/><circle cx="4.6" cy="4.6" r="1" fill="#666"/></svg>
<svg style="left:592.00px;top:335.50px" width="11" height="11" viewBox="0 0 12 12"><path d="M3 9.5L8 4.5" stroke="#e0e0e0" stroke-width="1.6"/><path d="M7 3.5l1.5-1.5 1.5 1.5-1.5 1.5z" fill="#e0e0e0"/><circle cx="3" cy="3" r="1.4" fill="#2a9bea"/></svg>
<div class="t" style="left:728.00px;top:337.92px;font-size:6.8px;color:#e0e0e0;font-weight:400;">RVBA :</div>
<div class="r" style="left:752.50px;top:332.50px;width:39.50px;height:17.80px;background:#2a2a2a;border-radius:3px;border:0.8px solid #232323;"></div>
<div class="t" style="left:756.50px;top:337.92px;font-size:6.8px;color:#e8e8e8;font-weight:400;">505050ff</div>
<div class="t" style="left:654.00px;top:360.52px;font-size:6.8px;color:#e0e0e0;font-weight:400;">Mode de fondu :</div>
<div class="r" style="left:706.00px;top:356.00px;width:88.70px;height:17.00px;background:#2c2c2c;border-radius:3px;border:0.8px solid #232323;"></div>
<div class="t" style="left:711.50px;top:360.92px;font-size:6.8px;color:#e0e0e0;font-weight:400;">Normal</div>
<svg style="left:781.50px;top:362.60px" width="6.5" height="4" viewBox="0 0 6.5 4"><path d="M0 0h6.5L3.25 3.8z" fill="#e0e0e0"/></svg>
<div class="r" style="left:564.00px;top:376.00px;width:189.00px;height:14.30px;background:#262626;border-radius:2px;"></div>
<div class="r" style="left:564.00px;top:376.00px;width:1.50px;height:14.30px;background:#1e4b8a;"></div>
<div class="t" style="left:566.50px;top:379.92px;font-size:6.8px;color:#e6e6e6;font-weight:400;">Flou (%)</div>
<div class="t" style="left:757.80px;top:379.92px;font-size:6.8px;color:#e6e6e6;font-weight:400;">0,0</div>
<div class="r" style="left:776.60px;top:382.60px;width:6.50px;height:1.20px;background:#555;"></div>
<div class="r" style="left:786.70px;top:382.60px;width:6.00px;height:1.10px;background:#e6e6e6;"></div>
<div class="r" style="left:789.15px;top:380.15px;width:1.10px;height:6.00px;background:#e6e6e6;"></div>
<div class="r" style="left:564.00px;top:393.40px;width:189.00px;height:13.50px;background:#1e56a8;border-radius:2px;border:0.8px solid #174282;"></div>
<div class="t" style="left:566.50px;top:396.92px;font-size:6.8px;color:#f0f0f0;font-weight:400;">Opacité (%)</div>
<div class="t" style="left:757.00px;top:396.92px;font-size:6.8px;color:#e6e6e6;font-weight:400;">100,0</div>
<div class="r" style="left:777.00px;top:399.60px;width:6.50px;height:1.20px;background:#e6e6e6;"></div>
<div class="r" style="left:786.70px;top:399.60px;width:6.00px;height:1.10px;background:#555;"></div>
<div class="r" style="left:789.15px;top:397.15px;width:1.10px;height:6.00px;background:#555;"></div>
<div class="r" style="left:0.00px;top:412.50px;width:800.00px;height:21.00px;background:#2e2e2e;"></div>
<svg style="left:0.00px;top:0.00px" width="800" height="453" viewBox="0 0 800 453"><rect x="19.50" y="414.6" width="12.93" height="8.6" fill="#000000"/><rect x="33.33" y="414.6" width="12.92" height="8.6" fill="#1a1a1a"/><rect x="47.15" y="414.6" width="12.92" height="8.6" fill="#333333"/><rect x="60.97" y="414.6" width="12.93" height="8.6" fill="#4d4d4d"/><rect x="74.80" y="414.6" width="13.01" height="8.6" fill="#666666"/><rect x="88.71" y="414.6" width="13.01" height="8.6" fill="#808080"/><rect x="102.62" y="414.6" width="13.01" height="8.6" fill="#999999"/><rect x="116.53" y="414.6" width="13.01" height="8.6" fill="#b3b3b3"/><rect x="130.44" y="414.6" width="13.01" height="8.6" fill="#cccccc"/><rect x="144.36" y="414.6" width="13.01" height="8.6" fill="#e6e6e6"/><rect x="158.27" y="414.6" width="13.01" height="8.6" fill="#ececec"/><rect x="172.18" y="414.6" width="13.01" height="8.6" fill="#f2f2f2"/><rect x="186.09" y="414.6" width="13.01" height="8.6" fill="#f9f9f9"/><rect x="200.00" y="414.6" width="13.02" height="8.6" fill="#ffffff"/><rect x="213.92" y="414.6" width="13.02" height="8.6" fill="#800000"/><rect x="227.83" y="414.6" width="13.02" height="8.6" fill="#ff0000"/><rect x="241.75" y="414.6" width="13.02" height="8.6" fill="#808000"/><rect x="255.66" y="414.6" width="13.02" height="8.6" fill="#ffff00"/><rect x="269.58" y="414.6" width="13.02" height="8.6" fill="#008000"/><rect x="283.49" y="414.6" width="13.02" height="8.6" fill="#00ff00"/><rect x="297.41" y="414.6" width="13.02" height="8.6" fill="#008080"/><rect x="311.32" y="414.6" width="13.02" height="8.6" fill="#00ffff"/><rect x="325.24" y="414.6" width="13.02" height="8.6" fill="#000080"/><rect x="339.15" y="414.6" width="13.02" height="8.6" fill="#0000ff"/><rect x="353.07" y="414.6" width="13.02" height="8.6" fill="#800080"/><rect x="366.98" y="414.6" width="13.02" height="8.6" fill="#ff00ff"/><rect x="380.90" y="414.6" width="12.94" height="8.6" fill="#2b0000"/><rect x="394.74" y="414.6" width="12.94" height="8.6" fill="#550000"/><rect x="408.59" y="414.6" width="12.94" height="8.6" fill="#800000"/><rect x="422.43" y="414.6" width="12.94" height="8.6" fill="#aa0000"/><rect x="436.28" y="414.6" width="12.94" height="8.6" fill="#d40000"/><rect x="450.12" y="414.6" width="12.94" height="8.6" fill="#ff0000"/><rect x="463.97" y="414.6" width="12.94" height="8.6" fill="#ff2a2a"/><rect x="477.81" y="414.6" width="12.94" height="8.6" fill="#ff5555"/><rect x="491.66" y="414.6" width="12.94" height="8.6" fill="#ff8080"/><rect x="505.50" y="414.6" width="12.93" height="8.6" fill="#ffaaaa"/><rect x="519.33" y="414.6" width="12.92" height="8.6" fill="#ffd5d5"/><rect x="533.15" y="414.6" width="12.93" height="8.6" fill="#280b0b"/><rect x="546.98" y="414.6" width="12.92" height="8.6" fill="#501616"/><rect x="560.80" y="414.6" width="12.93" height="8.6" fill="#782121"/><rect x="574.62" y="414.6" width="12.93" height="8.6" fill="#a02c2c"/><rect x="588.45" y="414.6" width="12.92" height="8.6" fill="#c83737"/><rect x="602.27" y="414.6" width="12.93" height="8.6" fill="#d35f5f"/><rect x="616.10" y="414.6" width="12.92" height="8.6" fill="#de8787"/><rect x="629.92" y="414.6" width="12.93" height="8.6" fill="#e9afaf"/><rect x="643.75" y="414.6" width="12.85" height="8.6" fill="#f4d7d7"/><rect x="657.50" y="414.6" width="12.85" height="8.6" fill="#241c1c"/><rect x="671.25" y="414.6" width="12.85" height="8.6" fill="#483737"/><rect x="685.00" y="414.6" width="11.50" height="8.6" fill="#6c5353"/><rect x="697.40" y="414.6" width="12.22" height="8.6" fill="#916f6f"/><rect x="710.52" y="414.6" width="12.22" height="8.6" fill="#ac9393"/><rect x="723.63" y="414.6" width="12.22" height="8.6" fill="#c8b7b7"/><rect x="736.75" y="414.6" width="12.35" height="8.6" fill="#e3dbdb"/><rect x="750.00" y="414.6" width="12.60" height="8.6" fill="#2b1100"/><rect x="19.50" y="424" width="12.93" height="8.6" fill="#552200"/><rect x="33.33" y="424" width="12.92" height="8.6" fill="#803300"/><rect x="47.15" y="424" width="12.92" height="8.6" fill="#aa4400"/><rect x="60.97" y="424" width="12.93" height="8.6" fill="#d45500"/><rect x="74.80" y="424" width="13.01" height="8.6" fill="#ff6600"/><rect x="88.71" y="424" width="13.01" height="8.6" fill="#ff7f2a"/><rect x="102.62" y="424" width="13.01" height="8.6" fill="#ff9955"/><rect x="116.53" y="424" width="13.01" height="8.6" fill="#ffb380"/><rect x="130.44" y="424" width="13.01" height="8.6" fill="#ffccaa"/><rect x="144.36" y="424" width="13.01" height="8.6" fill="#ffe6d5"/><rect x="158.27" y="424" width="13.01" height="8.6" fill="#28170b"/><rect x="172.18" y="424" width="13.01" height="8.6" fill="#502d16"/><rect x="186.09" y="424" width="13.01" height="8.6" fill="#784421"/><rect x="200.00" y="424" width="13.02" height="8.6" fill="#a05a2c"/><rect x="213.92" y="424" width="13.02" height="8.6" fill="#c87137"/><rect x="227.83" y="424" width="13.02" height="8.6" fill="#d38d5f"/><rect x="241.75" y="424" width="13.02" height="8.6" fill="#deaa87"/><rect x="255.66" y="424" width="13.02" height="8.6" fill="#e9c6af"/><rect x="269.58" y="424" width="13.02" height="8.6" fill="#f4e3d7"/><rect x="283.49" y="424" width="13.02" height="8.6" fill="#241f1c"/><rect x="297.41" y="424" width="13.02" height="8.6" fill="#483e37"/><rect x="311.32" y="424" width="13.02" height="8.6" fill="#6c5d53"/><rect x="325.24" y="424" width="13.02" height="8.6" fill="#917c6f"/><rect x="339.15" y="424" width="13.02" height="8.6" fill="#ac9d93"/><rect x="353.07" y="424" width="13.02" height="8.6" fill="#c8beb7"/><rect x="366.98" y="424" width="13.02" height="8.6" fill="#e3dedb"/><rect x="380.90" y="424" width="12.94" height="8.6" fill="#2b2200"/><rect x="394.74" y="424" width="12.94" height="8.6" fill="#554400"/><rect x="408.59" y="424" width="12.94" height="8.6" fill="#806600"/><rect x="422.43" y="424" width="12.94" height="8.6" fill="#aa8800"/><rect x="436.28" y="424" width="12.94" height="8.6" fill="#d4aa00"/><rect x="450.12" y="424" width="12.94" height="8.6" fill="#ffcc00"/><rect x="463.97" y="424" width="12.94" height="8.6" fill="#ffd42a"/><rect x="477.81" y="424" width="12.94" height="8.6" fill="#ffdd55"/><rect x="491.66" y="424" width="12.94" height="8.6" fill="#ffe680"/><rect x="505.50" y="424" width="12.93" height="8.6" fill="#ffeeaa"/><rect x="519.33" y="424" width="12.92" height="8.6" fill="#fff6d5"/><rect x="533.15" y="424" width="12.93" height="8.6" fill="#28220b"/><rect x="546.98" y="424" width="12.92" height="8.6" fill="#504416"/><rect x="560.80" y="424" width="12.93" height="8.6" fill="#786721"/><rect x="574.62" y="424" width="12.93" height="8.6" fill="#a0892c"/><rect x="588.45" y="424" width="12.92" height="8.6" fill="#c8ab37"/><rect x="602.27" y="424" width="12.93" height="8.6" fill="#d3bc5f"/><rect x="616.10" y="424" width="12.92" height="8.6" fill="#decd87"/><rect x="629.92" y="424" width="12.93" height="8.6" fill="#e9ddaf"/><rect x="643.75" y="424" width="12.85" height="8.6" fill="#f4eed7"/><rect x="657.50" y="424" width="12.85" height="8.6" fill="#24221c"/><rect x="671.25" y="424" width="12.85" height="8.6" fill="#484537"/><rect x="685.00" y="424" width="11.50" height="8.6" fill="#6c6753"/><rect x="697.40" y="424" width="12.22" height="8.6" fill="#918a6f"/><rect x="710.52" y="424" width="12.22" height="8.6" fill="#aca793"/><rect x="723.63" y="424" width="12.22" height="8.6" fill="#c8c4b7"/><rect x="736.75" y="424" width="12.35" height="8.6" fill="#e3e1db"/><rect x="750.00" y="424" width="12.60" height="8.6" fill="#222b00"/><rect x="0.9" y="414.5" width="18" height="18.3" fill="#fff"/><path d="M2.5 416 L17.5 431.5 M17.5 416 L2.5 431.5" stroke="#d0283c" stroke-width="1.4"/></svg>
<svg style="left:763.25px;top:418.10px" width="11" height="11" viewBox="0 0 12 12"><path d="M3 7l3-3 3 3" fill="none" stroke="#777" stroke-width="1"/></svg>
<svg style="left:776.40px;top:418.10px" width="11" height="11" viewBox="0 0 12 12"><path d="M2.5 4l3.5 3.5L9.5 4" fill="none" stroke="#e6e6e6" stroke-width="1.2"/></svg>
<svg style="left:788.25px;top:418.50px" width="11" height="11" viewBox="0 0 12 12"><path d="M1.5 2.5h9M1.5 6h9M1.5 9.5h9" stroke="#e6e6e6" stroke-width="1.2"/></svg>
<div class="r" style="left:0.00px;top:433.50px;width:800.00px;height:19.50px;background:#2e2e2e;"></div>
<div class="t" style="left:9.00px;top:435.52px;font-size:6.8px;color:#d6d6d6;font-weight:400;">Fond :</div>
<div class="t" style="left:0.50px;top:444.72px;font-size:6.8px;color:#d6d6d6;font-weight:400;">Contour :</div>
<div class="r" style="left:38.75px;top:434.50px;width:27.50px;height:8.00px;background:#505050;"></div>
<div class="t" style="left:41.00px;top:444.72px;font-size:6.8px;color:#e6e6e6;font-weight:700;">Indéfini</div>
<div class="t" style="left:72.00px;top:444.72px;font-size:6.8px;color:#d6d6d6;font-weight:400;">0,265</div>
<div class="t" style="left:93.75px;top:439.43px;font-size:7px;color:#d6d6d6;font-weight:400;">O :</div>
<div class="r" style="left:104.50px;top:434.00px;width:39.25px;height:22.00px;background:#2a2a2a;border-radius:3px;border:0.8px solid #252525;"></div>
<div class="t" style="left:108.00px;top:439.52px;font-size:6.8px;color:#e6e6e6;font-weight:400;">100</div>
<div class="r" style="left:127.00px;top:435.00px;width:0.70px;height:18.00px;background:#333;"></div>
<div class="r" style="left:135.50px;top:435.00px;width:0.70px;height:18.00px;background:#333;"></div>
<div class="r" style="left:128.50px;top:442.40px;width:5.50px;height:1.10px;background:#e6e6e6;"></div>
<div class="r" style="left:136.80px;top:442.40px;width:5.50px;height:1.10px;background:#555;"></div>
<div class="r" style="left:139.00px;top:440.20px;width:1.10px;height:5.50px;background:#555;"></div>
<div class="r" style="left:150.70px;top:437.50px;width:1.30px;height:10.00px;background:#2a7ae0;"></div>
<div class="t" style="left:155.50px;top:439.52px;font-size:6.8px;color:#e6e6e6;font-weight:400;">Calque 1</div>
<svg style="left:192.00px;top:437.30px" width="11" height="11" viewBox="0 0 12 12"><path d="M1 6 Q6 1 11 6 Q6 11 1 6z" fill="none" stroke="#e0e0e0" stroke-width="1.1"/><circle cx="6" cy="6" r="1.8" fill="#e0e0e0"/><path d="M2 2.5l1 1M10 2.5l-1 1M6 1v1.3" stroke="#e0e0e0" stroke-width="0.8"/></svg>
<svg style="left:214.50px;top:437.80px" width="10" height="10" viewBox="0 0 12 12"><rect x="2" y="5.5" width="6.5" height="5" fill="#e0e0e0"/><path d="M6.5 5.5V3.8a2 2 0 0 1 4 0v0.7" fill="none" stroke="#e0e0e0" stroke-width="1.1"/></svg>
<div class="t" style="left:233.25px;top:439.55px;font-size:6.75px;color:#e0e0e0;font-weight:400;"><b>Ctrl</b>: Sélectionner dans les groupes, Contraindre le déplacement à un axe; <b>Shift</b>: Ajouter à la sélection</div>
<svg style="left:570.00px;top:437.80px" width="10" height="10" viewBox="0 0 12 12"><path d="M7.5 3v6L3.5 6z" fill="#777"/></svg>
<div class="r" style="left:586.00px;top:434.50px;width:18.00px;height:19.00px;background:#2a2a2a;border-radius:3px;border:0.8px solid #222;"></div>
<svg style="left:589.50px;top:437.80px" width="10" height="10" viewBox="0 0 12 12"><path d="M2.5 4.5h6L5.5 7.5z" fill="#e0e0e0"/></svg>
<svg style="left:608.75px;top:437.80px" width="10" height="10" viewBox="0 0 12 12"><path d="M3.5 3v6L7.5 6z" fill="#777"/></svg>
<div class="t" style="left:628.80px;top:434.73px;font-size:7px;color:#d6d6d6;font-weight:400;">X :</div>
<div class="t" style="left:628.80px;top:441.83px;font-size:7px;color:#d6d6d6;font-weight:400;">Y :</div>
<svg class="tx" style="left:0;top:0" width="800" height="453"><text x="644.00" y="440.65" textLength="21.00" lengthAdjust="spacingAndGlyphs" font-family="Liberation Sans" font-size="7" font-weight="400" fill="#e6e6e6">503,15</text></svg>
<svg class="tx" style="left:0;top:0" width="800" height="453"><text x="644.00" y="447.75" textLength="21.00" lengthAdjust="spacingAndGlyphs" font-family="Liberation Sans" font-size="7" font-weight="400" fill="#e6e6e6">445,57</text></svg>
<div class="t" style="left:671.70px;top:439.43px;font-size:7px;color:#d6d6d6;font-weight:400;">Z :</div>
<div class="r" style="left:681.00px;top:434.00px;width:46.50px;height:22.00px;background:#2a2a2a;border-radius:3px;border:0.8px solid #252525;"></div>
<div class="t" style="left:688.50px;top:439.52px;font-size:6.8px;color:#e6e6e6;font-weight:400;">46%</div>
<div class="r" style="left:709.00px;top:435.00px;width:0.70px;height:18.00px;background:#333;"></div>
<div class="r" style="left:718.00px;top:435.00px;width:0.70px;height:18.00px;background:#333;"></div>
<div class="r" style="left:710.30px;top:442.40px;width:6.00px;height:1.10px;background:#e6e6e6;"></div>
<div class="r" style="left:719.60px;top:442.40px;width:6.00px;height:1.10px;background:#e6e6e6;"></div>
<div class="r" style="left:722.05px;top:439.95px;width:1.10px;height:6.00px;background:#e6e6e6;"></div>
<div class="t" style="left:733.50px;top:439.43px;font-size:7px;color:#d6d6d6;font-weight:400;">R :</div>
<div class="r" style="left:744.40px;top:434.00px;width:50.00px;height:22.00px;background:#2a2a2a;border-radius:3px;border:0.8px solid #252525;"></div>
<div class="t" style="left:752.50px;top:439.52px;font-size:6.8px;color:#e6e6e6;font-weight:400;">0,00°</div>
<div class="r" style="left:776.00px;top:435.00px;width:0.70px;height:18.00px;background:#333;"></div>
<div class="r" style="left:785.00px;top:435.00px;width:0.70px;height:18.00px;background:#333;"></div>
<div class="r" style="left:777.30px;top:442.40px;width:6.00px;height:1.10px;background:#e6e6e6;"></div>
<div class="r" style="left:786.60px;top:442.40px;width:6.00px;height:1.10px;background:#e6e6e6;"></div>
<div class="r" style="left:789.05px;top:439.95px;width:1.10px;height:6.00px;background:#e6e6e6;"></div>
<svg style="left:794.00px;top:444.00px" width="6" height="9" viewBox="0 0 6 9"><path d="M6 0 V9 H0z" fill="#c01030"/></svg>
<svg style="left:0.00px;top:447.50px" width="3.5" height="5.5" viewBox="0 0 3.5 5.5"><path d="M0 0 L3.5 5.5 H0z" fill="#a00030"/></svg>
</body></html>
